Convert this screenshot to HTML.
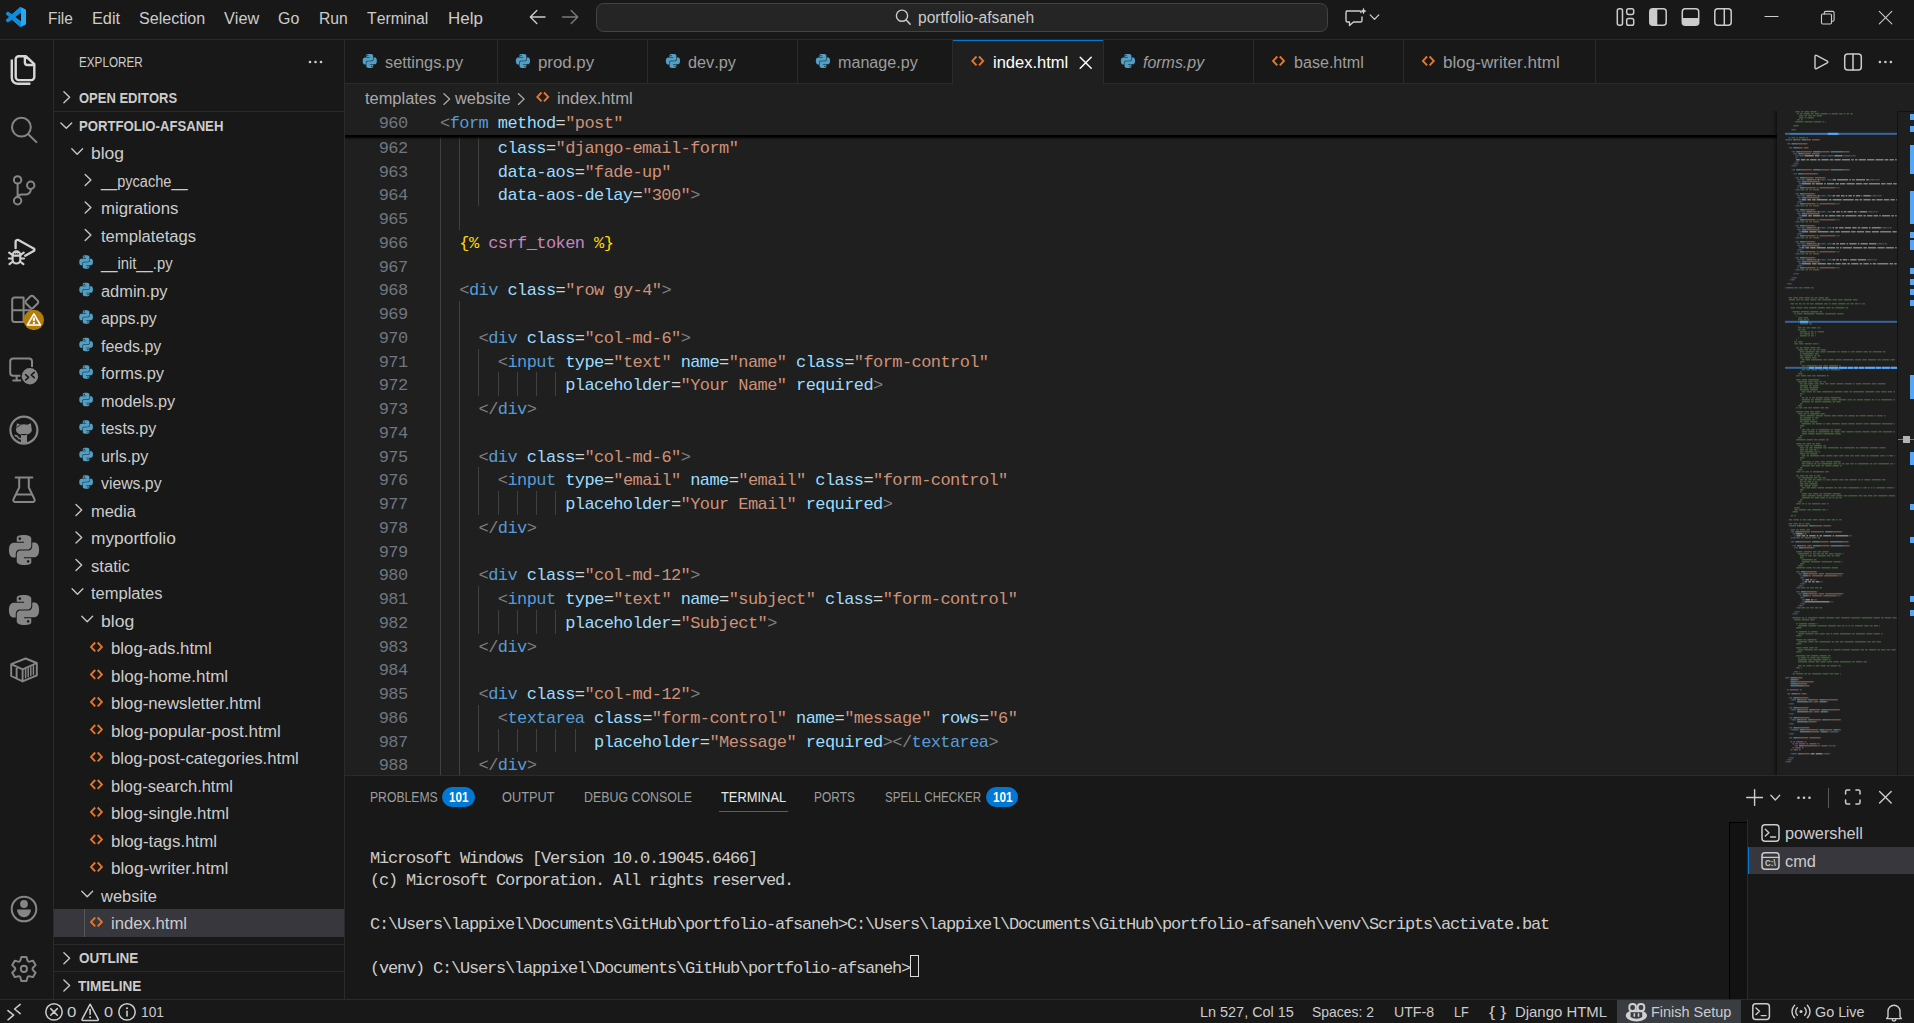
<!DOCTYPE html>
<html lang="en"><head><meta charset="utf-8"><title>index.html - portfolio-afsaneh - Visual Studio Code</title>
<style>
html,body{margin:0;padding:0;background:#181818;}
body{width:1914px;height:1023px;overflow:hidden;position:relative;font-family:"Liberation Sans",sans-serif;font-kerning:none;}
.b{position:absolute;display:block;}
.t{position:absolute;white-space:pre;line-height:20px;transform-origin:0 0;font-family:"Liberation Sans",sans-serif;}
.m{position:absolute;white-space:pre;font-family:"Liberation Mono",monospace;}
.code{font-size:17px;line-height:23.75px;letter-spacing:-0.582px;color:#d4d4d4;}
.term{font-size:17px;line-height:22px;letter-spacing:-1.202px;color:#ccc;}
svg{overflow:visible}
.s{fill:none;stroke:currentColor;stroke-linecap:round;stroke-linejoin:round}
i{font-style:normal}
.g{color:#808080}.n{color:#569cd6}.a{color:#9cdcfe}.v{color:#ce9178}.y{color:#ffd700}.p{color:#c586c0}
</style></head>
<body>
<div class="b" style="left:0px;top:0px;width:1914px;height:1023px;background:#181818;"></div>
<div class="b" style="left:345px;top:84px;width:1569px;height:691px;background:#1f1f1f;"></div>
<div class="b" style="left:0px;top:39px;width:1914px;height:1px;background:#2b2b2b;"></div>
<div class="b" style="left:53px;top:40px;width:1px;height:959px;background:#2b2b2b;"></div>
<div class="b" style="left:344px;top:40px;width:1px;height:959px;background:#2b2b2b;"></div>
<div class="b" style="left:0px;top:999px;width:1914px;height:1px;background:#2b2b2b;"></div>
<div class="b" style="left:345px;top:775px;width:1569px;height:1px;background:#2b2b2b;"></div>
<div class="b" style="left:345px;top:83px;width:1569px;height:1px;background:#2b2b2b;"></div>
<div class="t " style="left:47.80px;top:8.80px;font-size:16px;transform:scaleX(0.9635);color:#cccccc;">File</div>
<div class="t " style="left:91.50px;top:8.80px;font-size:16px;transform:scaleX(1.0170);color:#cccccc;">Edit</div>
<div class="t " style="left:138.60px;top:8.80px;font-size:16px;transform:scaleX(1.0049);color:#cccccc;">Selection</div>
<div class="t " style="left:223.70px;top:8.80px;font-size:16px;transform:scaleX(1.0162);color:#cccccc;">View</div>
<div class="t " style="left:278.30px;top:8.80px;font-size:16px;transform:scaleX(0.9951);color:#cccccc;">Go</div>
<div class="t " style="left:319.20px;top:8.80px;font-size:16px;transform:scaleX(0.9792);color:#cccccc;">Run</div>
<div class="t " style="left:367.10px;top:8.80px;font-size:16px;transform:scaleX(0.9856);color:#cccccc;">Terminal</div>
<div class="t " style="left:447.60px;top:8.80px;font-size:16px;transform:scaleX(1.0588);color:#cccccc;">Help</div>
<div class="b" style="left:596px;top:3px;width:732px;height:29px;box-sizing:border-box;background:#252525;border:1px solid #434343;border-radius:7.5px"></div>
<div class="t " style="left:918.10px;top:7.80px;font-size:16px;transform:scaleX(0.9736);color:#cccccc;">portfolio-afsaneh</div>
<div class="t " style="left:78.70px;top:52.30px;font-size:14px;transform:scaleX(0.8349);color:#cccccc;">EXPLORER</div>
<div class="b" style="left:54px;top:111px;width:290px;height:1px;background:#2b2b2b;"></div>
<div class="t " style="left:78.50px;top:88.30px;font-size:14px;transform:scaleX(0.9269);color:#cccccc;font-weight:700;">OPEN EDITORS</div>
<div class="t " style="left:78.70px;top:116.30px;font-size:14px;transform:scaleX(0.9374);color:#cccccc;font-weight:700;">PORTFOLIO-AFSANEH</div>
<div class="b" style="left:54px;top:909px;width:290px;height:27.5px;background:#37373d;"></div>
<div class="b" style="left:84px;top:909px;width:1px;height:27.5px;background:#585858;"></div>
<div class="t " style="left:91.00px;top:143.80px;font-size:16px;transform:scaleX(1.0922);color:#cccccc;">blog</div>
<div class="t " style="left:101.00px;top:171.80px;font-size:16px;transform:scaleX(0.9102);color:#cccccc;">__pycache__</div>
<div class="t " style="left:101.00px;top:198.80px;font-size:16px;transform:scaleX(1.0493);color:#cccccc;">migrations</div>
<div class="t " style="left:101.00px;top:226.80px;font-size:16px;transform:scaleX(1.0374);color:#cccccc;">templatetags</div>
<div class="t " style="left:101.00px;top:253.80px;font-size:16px;transform:scaleX(0.9244);color:#cccccc;">__init__.py</div>
<div class="t " style="left:101.00px;top:281.80px;font-size:16px;transform:scaleX(1.0249);color:#cccccc;">admin.py</div>
<div class="t " style="left:101.00px;top:308.80px;font-size:16px;transform:scaleX(0.9964);color:#cccccc;">apps.py</div>
<div class="t " style="left:101.00px;top:336.80px;font-size:16px;transform:scaleX(0.9960);color:#cccccc;">feeds.py</div>
<div class="t " style="left:101.00px;top:363.80px;font-size:16px;transform:scaleX(1.0277);color:#cccccc;">forms.py</div>
<div class="t " style="left:101.00px;top:391.80px;font-size:16px;transform:scaleX(1.0153);color:#cccccc;">models.py</div>
<div class="t " style="left:101.00px;top:418.80px;font-size:16px;transform:scaleX(1.0019);color:#cccccc;">tests.py</div>
<div class="t " style="left:101.00px;top:446.80px;font-size:16px;transform:scaleX(1.0046);color:#cccccc;">urls.py</div>
<div class="t " style="left:101.00px;top:473.80px;font-size:16px;transform:scaleX(0.9868);color:#cccccc;">views.py</div>
<div class="t " style="left:91.00px;top:501.80px;font-size:16px;transform:scaleX(1.0290);color:#cccccc;">media</div>
<div class="t " style="left:91.00px;top:528.80px;font-size:16px;transform:scaleX(1.0842);color:#cccccc;">myportfolio</div>
<div class="t " style="left:91.00px;top:556.80px;font-size:16px;transform:scaleX(1.0401);color:#cccccc;">static</div>
<div class="t " style="left:91.30px;top:583.80px;font-size:16px;transform:scaleX(1.0313);color:#cccccc;">templates</div>
<div class="t " style="left:101.00px;top:611.80px;font-size:16px;transform:scaleX(1.0988);color:#cccccc;">blog</div>
<div class="t " style="left:111.00px;top:638.80px;font-size:16px;transform:scaleX(1.0499);color:#cccccc;">blog-ads.html</div>
<div class="t " style="left:111.00px;top:666.80px;font-size:16px;transform:scaleX(1.0623);color:#cccccc;">blog-home.html</div>
<div class="t " style="left:111.00px;top:693.80px;font-size:16px;transform:scaleX(1.0480);color:#cccccc;">blog-newsletter.html</div>
<div class="t " style="left:111.00px;top:721.80px;font-size:16px;transform:scaleX(1.0669);color:#cccccc;">blog-popular-post.html</div>
<div class="t " style="left:111.00px;top:748.80px;font-size:16px;transform:scaleX(1.0456);color:#cccccc;">blog-post-categories.html</div>
<div class="t " style="left:111.00px;top:776.80px;font-size:16px;transform:scaleX(1.0302);color:#cccccc;">blog-search.html</div>
<div class="t " style="left:111.00px;top:803.80px;font-size:16px;transform:scaleX(1.0525);color:#cccccc;">blog-single.html</div>
<div class="t " style="left:111.00px;top:831.80px;font-size:16px;transform:scaleX(1.0552);color:#cccccc;">blog-tags.html</div>
<div class="t " style="left:111.00px;top:858.80px;font-size:16px;transform:scaleX(1.0721);color:#cccccc;">blog-writer.html</div>
<div class="t " style="left:101.00px;top:886.80px;font-size:16px;transform:scaleX(1.0293);color:#cccccc;">website</div>
<div class="t " style="left:111.00px;top:913.80px;font-size:16px;transform:scaleX(1.0428);color:#cccccc;">index.html</div>
<div class="b" style="left:54px;top:944px;width:290px;height:1px;background:#2b2b2b;"></div>
<div class="b" style="left:54px;top:971px;width:290px;height:1px;background:#2b2b2b;"></div>
<div class="t " style="left:78.60px;top:948.30px;font-size:14px;transform:scaleX(0.9629);color:#cccccc;font-weight:700;">OUTLINE</div>
<div class="t " style="left:78.40px;top:976.30px;font-size:14px;transform:scaleX(0.9698);color:#cccccc;font-weight:700;">TIMELINE</div>
<div class="b" style="left:497px;top:40px;width:1px;height:43px;background:#2b2b2b;"></div>
<div class="t " style="left:384.60px;top:52.80px;font-size:16px;transform:scaleX(1.0216);color:#9d9d9d;">settings.py</div>
<div class="b" style="left:647px;top:40px;width:1px;height:43px;background:#2b2b2b;"></div>
<div class="t " style="left:537.80px;top:52.80px;font-size:16px;transform:scaleX(1.0520);color:#9d9d9d;">prod.py</div>
<div class="b" style="left:797px;top:40px;width:1px;height:43px;background:#2b2b2b;"></div>
<div class="t " style="left:687.80px;top:52.80px;font-size:16px;transform:scaleX(1.0148);color:#9d9d9d;">dev.py</div>
<div class="b" style="left:952px;top:40px;width:1px;height:43px;background:#2b2b2b;"></div>
<div class="t " style="left:837.80px;top:52.80px;font-size:16px;transform:scaleX(1.0073);color:#9d9d9d;">manage.py</div>
<div class="b" style="left:1103px;top:40px;width:1px;height:43px;background:#2b2b2b;"></div>
<div class="b" style="left:953px;top:40px;width:150px;height:44px;background:#1f1f1f;"></div>
<div class="b" style="left:953px;top:40px;width:150px;height:1.4px;background:#0078d4;"></div>
<div class="t " style="left:992.80px;top:52.80px;font-size:16px;transform:scaleX(1.0318);color:#ffffff;">index.html</div>
<div class="b" style="left:1253px;top:40px;width:1px;height:43px;background:#2b2b2b;"></div>
<div class="t " style="left:1142.80px;top:52.80px;font-size:16px;transform:scaleX(0.9967);color:#9d9d9d;font-style:italic;">forms.py</div>
<div class="b" style="left:1403px;top:40px;width:1px;height:43px;background:#2b2b2b;"></div>
<div class="t " style="left:1293.60px;top:52.80px;font-size:16px;transform:scaleX(1.0054);color:#9d9d9d;">base.html</div>
<div class="b" style="left:1595px;top:40px;width:1px;height:43px;background:#2b2b2b;"></div>
<div class="t " style="left:1443.40px;top:52.80px;font-size:16px;transform:scaleX(1.0675);color:#9d9d9d;">blog-writer.html</div>
<div class="t " style="left:364.80px;top:88.80px;font-size:16px;transform:scaleX(1.0256);color:#a9a9a9;">templates</div>
<div class="t " style="left:455.10px;top:88.80px;font-size:16px;transform:scaleX(1.0238);color:#a9a9a9;">website</div>
<div class="t " style="left:557.40px;top:88.80px;font-size:16px;transform:scaleX(1.0373);color:#a9a9a9;">index.html</div>
<div class="b" style="left:345px;top:111px;width:1432px;height:664px;overflow:hidden">
<div class="b" style="left:95px;top:23.75px;width:1px;height:641.25px;background:#404040"></div>
<div class="b" style="left:114px;top:23.75px;width:1px;height:95.00px;background:#404040"></div>
<div class="b" style="left:114px;top:190.00px;width:1px;height:475.00px;background:#404040"></div>
<div class="b" style="left:133px;top:23.75px;width:1px;height:71.25px;background:#404040"></div>
<div class="b" style="left:133px;top:237.50px;width:1px;height:47.50px;background:#404040"></div>
<div class="b" style="left:133px;top:356.25px;width:1px;height:47.50px;background:#404040"></div>
<div class="b" style="left:133px;top:475.00px;width:1px;height:47.50px;background:#404040"></div>
<div class="b" style="left:133px;top:593.75px;width:1px;height:47.50px;background:#404040"></div>
<div class="b" style="left:153px;top:261.25px;width:1px;height:23.75px;background:#404040"></div>
<div class="b" style="left:153px;top:380.00px;width:1px;height:23.75px;background:#404040"></div>
<div class="b" style="left:153px;top:498.75px;width:1px;height:23.75px;background:#404040"></div>
<div class="b" style="left:153px;top:617.50px;width:1px;height:23.75px;background:#404040"></div>
<div class="b" style="left:172px;top:261.25px;width:1px;height:23.75px;background:#404040"></div>
<div class="b" style="left:172px;top:380.00px;width:1px;height:23.75px;background:#404040"></div>
<div class="b" style="left:172px;top:498.75px;width:1px;height:23.75px;background:#404040"></div>
<div class="b" style="left:172px;top:617.50px;width:1px;height:23.75px;background:#404040"></div>
<div class="b" style="left:191px;top:261.25px;width:1px;height:23.75px;background:#404040"></div>
<div class="b" style="left:191px;top:380.00px;width:1px;height:23.75px;background:#404040"></div>
<div class="b" style="left:191px;top:498.75px;width:1px;height:23.75px;background:#404040"></div>
<div class="b" style="left:191px;top:617.50px;width:1px;height:23.75px;background:#404040"></div>
<div class="b" style="left:210px;top:261.25px;width:1px;height:23.75px;background:#404040"></div>
<div class="b" style="left:210px;top:380.00px;width:1px;height:23.75px;background:#404040"></div>
<div class="b" style="left:210px;top:498.75px;width:1px;height:23.75px;background:#404040"></div>
<div class="b" style="left:210px;top:617.50px;width:1px;height:23.75px;background:#404040"></div>
<div class="b" style="left:230px;top:617.50px;width:1px;height:23.75px;background:#404040"></div>
<div class="m code" style="left:0;top:25.75px;width:62.5px;text-align:right;color:#6e7681">962</div>
<div class="m code" style="left:152.82px;top:25.75px"><i class="a">class</i>=<i class="v">"django-email-form"</i></div>
<div class="m code" style="left:0;top:49.50px;width:62.5px;text-align:right;color:#6e7681">963</div>
<div class="m code" style="left:152.82px;top:49.50px"><i class="a">data-aos</i>=<i class="v">"fade-up"</i></div>
<div class="m code" style="left:0;top:73.25px;width:62.5px;text-align:right;color:#6e7681">964</div>
<div class="m code" style="left:152.82px;top:73.25px"><i class="a">data-aos-delay</i>=<i class="v">"300"</i><i class="g">&gt;</i></div>
<div class="m code" style="left:0;top:97.00px;width:62.5px;text-align:right;color:#6e7681">965</div>
<div class="m code" style="left:0;top:120.75px;width:62.5px;text-align:right;color:#6e7681">966</div>
<div class="m code" style="left:114.34px;top:120.75px"><i class="y">{%</i> <i class="p">csrf_token</i> <i class="y">%}</i></div>
<div class="m code" style="left:0;top:144.50px;width:62.5px;text-align:right;color:#6e7681">967</div>
<div class="m code" style="left:0;top:168.25px;width:62.5px;text-align:right;color:#6e7681">968</div>
<div class="m code" style="left:114.34px;top:168.25px"><i class="g">&lt;</i><i class="n">div</i> <i class="a">class</i>=<i class="v">"row gy-4"</i><i class="g">&gt;</i></div>
<div class="m code" style="left:0;top:192.00px;width:62.5px;text-align:right;color:#6e7681">969</div>
<div class="m code" style="left:0;top:215.75px;width:62.5px;text-align:right;color:#6e7681">970</div>
<div class="m code" style="left:133.58px;top:215.75px"><i class="g">&lt;</i><i class="n">div</i> <i class="a">class</i>=<i class="v">"col-md-6"</i><i class="g">&gt;</i></div>
<div class="m code" style="left:0;top:239.50px;width:62.5px;text-align:right;color:#6e7681">971</div>
<div class="m code" style="left:152.82px;top:239.50px"><i class="g">&lt;</i><i class="n">input</i> <i class="a">type</i>=<i class="v">"text"</i> <i class="a">name</i>=<i class="v">"name"</i> <i class="a">class</i>=<i class="v">"form-control"</i></div>
<div class="m code" style="left:0;top:263.25px;width:62.5px;text-align:right;color:#6e7681">972</div>
<div class="m code" style="left:220.16px;top:263.25px"><i class="a">placeholder</i>=<i class="v">"Your Name"</i> <i class="a">required</i><i class="g">&gt;</i></div>
<div class="m code" style="left:0;top:287.00px;width:62.5px;text-align:right;color:#6e7681">973</div>
<div class="m code" style="left:133.58px;top:287.00px"><i class="g">&lt;/</i><i class="n">div</i><i class="g">&gt;</i></div>
<div class="m code" style="left:0;top:310.75px;width:62.5px;text-align:right;color:#6e7681">974</div>
<div class="m code" style="left:0;top:334.50px;width:62.5px;text-align:right;color:#6e7681">975</div>
<div class="m code" style="left:133.58px;top:334.50px"><i class="g">&lt;</i><i class="n">div</i> <i class="a">class</i>=<i class="v">"col-md-6"</i><i class="g">&gt;</i></div>
<div class="m code" style="left:0;top:358.25px;width:62.5px;text-align:right;color:#6e7681">976</div>
<div class="m code" style="left:152.82px;top:358.25px"><i class="g">&lt;</i><i class="n">input</i> <i class="a">type</i>=<i class="v">"email"</i> <i class="a">name</i>=<i class="v">"email"</i> <i class="a">class</i>=<i class="v">"form-control"</i></div>
<div class="m code" style="left:0;top:382.00px;width:62.5px;text-align:right;color:#6e7681">977</div>
<div class="m code" style="left:220.16px;top:382.00px"><i class="a">placeholder</i>=<i class="v">"Your Email"</i> <i class="a">required</i><i class="g">&gt;</i></div>
<div class="m code" style="left:0;top:405.75px;width:62.5px;text-align:right;color:#6e7681">978</div>
<div class="m code" style="left:133.58px;top:405.75px"><i class="g">&lt;/</i><i class="n">div</i><i class="g">&gt;</i></div>
<div class="m code" style="left:0;top:429.50px;width:62.5px;text-align:right;color:#6e7681">979</div>
<div class="m code" style="left:0;top:453.25px;width:62.5px;text-align:right;color:#6e7681">980</div>
<div class="m code" style="left:133.58px;top:453.25px"><i class="g">&lt;</i><i class="n">div</i> <i class="a">class</i>=<i class="v">"col-md-12"</i><i class="g">&gt;</i></div>
<div class="m code" style="left:0;top:477.00px;width:62.5px;text-align:right;color:#6e7681">981</div>
<div class="m code" style="left:152.82px;top:477.00px"><i class="g">&lt;</i><i class="n">input</i> <i class="a">type</i>=<i class="v">"text"</i> <i class="a">name</i>=<i class="v">"subject"</i> <i class="a">class</i>=<i class="v">"form-control"</i></div>
<div class="m code" style="left:0;top:500.75px;width:62.5px;text-align:right;color:#6e7681">982</div>
<div class="m code" style="left:220.16px;top:500.75px"><i class="a">placeholder</i>=<i class="v">"Subject"</i><i class="g">&gt;</i></div>
<div class="m code" style="left:0;top:524.50px;width:62.5px;text-align:right;color:#6e7681">983</div>
<div class="m code" style="left:133.58px;top:524.50px"><i class="g">&lt;/</i><i class="n">div</i><i class="g">&gt;</i></div>
<div class="m code" style="left:0;top:548.25px;width:62.5px;text-align:right;color:#6e7681">984</div>
<div class="m code" style="left:0;top:572.00px;width:62.5px;text-align:right;color:#6e7681">985</div>
<div class="m code" style="left:133.58px;top:572.00px"><i class="g">&lt;</i><i class="n">div</i> <i class="a">class</i>=<i class="v">"col-md-12"</i><i class="g">&gt;</i></div>
<div class="m code" style="left:0;top:595.75px;width:62.5px;text-align:right;color:#6e7681">986</div>
<div class="m code" style="left:152.82px;top:595.75px"><i class="g">&lt;</i><i class="n">textarea</i> <i class="a">class</i>=<i class="v">"form-control"</i> <i class="a">name</i>=<i class="v">"message"</i> <i class="a">rows</i>=<i class="v">"6"</i></div>
<div class="m code" style="left:0;top:619.50px;width:62.5px;text-align:right;color:#6e7681">987</div>
<div class="m code" style="left:249.02px;top:619.50px"><i class="a">placeholder</i>=<i class="v">"Message"</i> <i class="a">required</i><i class="g">&gt;</i><i class="g">&lt;/</i><i class="n">textarea</i><i class="g">&gt;</i></div>
<div class="m code" style="left:0;top:643.25px;width:62.5px;text-align:right;color:#6e7681">988</div>
<div class="m code" style="left:133.58px;top:643.25px"><i class="g">&lt;/</i><i class="n">div</i><i class="g">&gt;</i></div>
<div class="b" style="left:0;top:23.75px;width:1432px;height:5.2px;background:linear-gradient(#000 0,#000 30%,rgba(0,0,0,.55) 58%,rgba(0,0,0,.12) 82%,rgba(0,0,0,0) 100%)"></div>
<div class="b" style="left:1426px;top:0;width:6px;height:664px;background:linear-gradient(to right,rgba(0,0,0,0),rgba(0,0,0,.12) 50%,rgba(0,0,0,.5))"></div>
<div class="b" style="left:0;top:0;width:1426px;height:23.75px;background:#1f1f1f"></div>
<div class="m code" style="left:0;top:1.00px;width:62.5px;text-align:right;color:#6e7681">960</div>
<div class="m code" style="left:95.10px;top:1.00px"><i class="g">&lt;</i><i class="n">form</i> <i class="a">method</i>=<i class="v">"post"</i></div>
</div>
<div class="t " style="left:369.90px;top:787.30px;font-size:14px;transform:scaleX(0.8697);color:#9d9d9d;">PROBLEMS</div>
<div class="b" style="left:442.3px;top:787px;width:32.6px;height:20px;border-radius:10px;background:#0078d4"></div>
<div class="t " style="left:449.10px;top:787.30px;font-size:14px;transform:scaleX(0.8288);color:#fff;font-weight:700;">101</div>
<div class="t " style="left:501.80px;top:787.30px;font-size:14px;transform:scaleX(0.9115);color:#9d9d9d;">OUTPUT</div>
<div class="t " style="left:583.60px;top:787.30px;font-size:14px;transform:scaleX(0.8847);color:#9d9d9d;">DEBUG CONSOLE</div>
<div class="t " style="left:720.50px;top:787.30px;font-size:14px;transform:scaleX(0.9205);color:#e7e7e7;">TERMINAL</div>
<div class="b" style="left:719.2px;top:810.8px;width:68.7px;height:1.3px;background:#0078d4;"></div>
<div class="t " style="left:814.40px;top:787.30px;font-size:14px;transform:scaleX(0.8472);color:#9d9d9d;">PORTS</div>
<div class="t " style="left:884.60px;top:787.30px;font-size:14px;transform:scaleX(0.8286);color:#9d9d9d;">SPELL CHECKER</div>
<div class="b" style="left:985.6px;top:787px;width:32.6px;height:20px;border-radius:10px;background:#0078d4"></div>
<div class="t " style="left:992.50px;top:787.30px;font-size:14px;transform:scaleX(0.8374);color:#fff;font-weight:700;">101</div>
<div class="m term" style="left:370px;top:848px">Microsoft Windows [Version 10.0.19045.6466]</div>
<div class="m term" style="left:370px;top:870px">(c) Microsoft Corporation. All rights reserved.</div>
<div class="m term" style="left:370px;top:914px">C:\Users\lappixel\Documents\GitHub\portfolio-afsaneh&gt;C:\Users\lappixel\Documents\GitHub\portfolio-afsaneh\venv\Scripts\activate.bat</div>
<div class="m term" style="left:370px;top:958px">(venv) C:\Users\lappixel\Documents\GitHub\portfolio-afsaneh&gt;</div>
<div class="b" style="left:910px;top:955px;width:9px;height:22px;box-sizing:border-box;border:1px solid #dcdcdc"></div>
<div class="b" style="left:1828px;top:788px;width:1px;height:20px;background:#5a5a5a;"></div>
<div class="b" style="left:1729px;top:822px;width:18px;height:177px;background:#121212;"></div>
<div class="b" style="left:1729px;top:822px;width:18px;height:1px;background:#000;"></div>
<div class="b" style="left:1729px;top:822px;width:1px;height:177px;background:#000;"></div>
<div class="b" style="left:1747px;top:819px;width:1px;height:180px;background:#2b2b2b;"></div>
<div class="b" style="left:1748px;top:847px;width:166px;height:27px;background:#37373d;"></div>
<div class="b" style="left:1748px;top:847px;width:1.2px;height:27px;background:#0078d4;"></div>
<div class="t " style="left:1784.80px;top:823.80px;font-size:16px;transform:scaleX(1.0177);color:#cccccc;">powershell</div>
<div class="t " style="left:1764.95px;top:853.30px;font-size:9px;transform:scaleX(0.8844);color:#ccc;font-weight:700;">C:\</div>
<div class="t " style="left:1784.80px;top:851.80px;font-size:16px;transform:scaleX(1.0236);color:#cccccc;">cmd</div>
<div class="t " style="left:67.25px;top:1001.80px;font-size:15px;transform:scaleX(1.1208);color:#cccccc;">0</div>
<div class="t " style="left:104.05px;top:1001.80px;font-size:15px;transform:scaleX(1.0848);color:#cccccc;">0</div>
<div class="t " style="left:141.05px;top:1001.80px;font-size:15px;transform:scaleX(0.9170);color:#cccccc;">101</div>
<div class="t " style="left:1199.55px;top:1001.80px;font-size:15px;transform:scaleX(0.9618);color:#cccccc;">Ln 527, Col 15</div>
<div class="t " style="left:1312.25px;top:1001.80px;font-size:15px;transform:scaleX(0.9287);color:#cccccc;">Spaces: 2</div>
<div class="t " style="left:1393.65px;top:1001.80px;font-size:15px;transform:scaleX(0.9425);color:#cccccc;">UTF-8</div>
<div class="t " style="left:1453.65px;top:1001.80px;font-size:15px;transform:scaleX(0.8483);color:#cccccc;">LF</div>
<div class="t " style="left:1489.35px;top:1001.80px;font-size:15px;transform:scaleX(1.2159);color:#cccccc;">{ }</div>
<div class="t " style="left:1514.75px;top:1001.80px;font-size:15px;transform:scaleX(0.9937);color:#cccccc;">Django HTML</div>
<div class="b" style="left:1617px;top:1000px;width:124px;height:23px;background:#393c41;"></div>
<div class="t " style="left:1650.75px;top:1001.80px;font-size:15px;transform:scaleX(0.9637);color:#cccccc;">Finish Setup</div>
<div class="t " style="left:1814.75px;top:1001.80px;font-size:15px;transform:scaleX(0.9566);color:#cccccc;">Go Live</div>
<div class="b" style="left:1897px;top:111px;width:1px;height:664px;background:#121212;"></div>
<div class="b" style="left:1897px;top:111px;width:17px;height:1px;background:#121212;"></div>
<div class="b" style="left:1909.5px;top:113.6px;width:4.5px;height:6.4px;background:#56a6f8;"></div>
<div class="b" style="left:1909.5px;top:126px;width:4.5px;height:5.9px;background:#56a6f8;"></div>
<div class="b" style="left:1909.5px;top:145px;width:4.5px;height:29.3px;background:#56a6f8;"></div>
<div class="b" style="left:1909.5px;top:191px;width:4.5px;height:32.7px;background:#56a6f8;"></div>
<div class="b" style="left:1909.5px;top:232.1px;width:4.5px;height:5.9px;background:#56a6f8;"></div>
<div class="b" style="left:1909.5px;top:240.4px;width:4.5px;height:9.2px;background:#56a6f8;"></div>
<div class="b" style="left:1909.5px;top:268.1px;width:4.5px;height:5.9px;background:#56a6f8;"></div>
<div class="b" style="left:1909.5px;top:279.3px;width:4.5px;height:5.7px;background:#56a6f8;"></div>
<div class="b" style="left:1909.5px;top:289.4px;width:4.5px;height:5.8px;background:#56a6f8;"></div>
<div class="b" style="left:1909.5px;top:300.3px;width:4.5px;height:5.9px;background:#56a6f8;"></div>
<div class="b" style="left:1909.5px;top:375.4px;width:4.5px;height:23.9px;background:#56a6f8;"></div>
<div class="b" style="left:1909.5px;top:452.4px;width:4.5px;height:13.1px;background:#56a6f8;"></div>
<div class="b" style="left:1909.5px;top:503.8px;width:4.5px;height:5.8px;background:#56a6f8;"></div>
<div class="b" style="left:1909.5px;top:536.8px;width:4.5px;height:5.9px;background:#56a6f8;"></div>
<div class="b" style="left:1909.5px;top:595.9px;width:4.5px;height:5.9px;background:#56a6f8;"></div>
<div class="b" style="left:1909.5px;top:609.9px;width:4.5px;height:5.9px;background:#56a6f8;"></div>
<div class="b" style="left:1898px;top:438.6px;width:16px;height:1.8px;background:#7d7d7d;"></div>
<div class="b" style="left:1902.8px;top:436px;width:7.2px;height:6.6px;background:#b4b4b4;"></div>
<svg class="b" style="left:0;top:0" width="1914" height="1023" viewBox="0 0 1914 1023"><g transform="translate(6 7) scale(0.833333)" ><clipPath id="vl"><rect x="0" y="0" width="17.9" height="24"/></clipPath><path d="M23.15 2.587L18.21.21a1.494 1.494 0 0 0-1.705.29l-9.46 8.63-4.12-3.128a.999.999 0 0 0-1.276.057L.327 7.261A1 1 0 0 0 .326 8.74L3.899 12 .326 15.26a1 1 0 0 0 .001 1.479L1.65 17.94a.999.999 0 0 0 1.276.057l4.12-3.128 9.46 8.63a1.492 1.492 0 0 0 1.704.29l4.942-2.377A1.5 1.5 0 0 0 24 20.06V3.939a1.5 1.5 0 0 0-.85-1.352zm-5.146 14.861L10.826 12l7.178-5.448v10.896z" fill="#27a9f4"/><path d="M23.15 2.587L18.21.21a1.494 1.494 0 0 0-1.705.29l-9.46 8.63-4.12-3.128a.999.999 0 0 0-1.276.057L.327 7.261A1 1 0 0 0 .326 8.74L3.899 12 .326 15.26a1 1 0 0 0 .001 1.479L1.65 17.94a.999.999 0 0 0 1.276.057l4.12-3.128 9.46 8.63a1.492 1.492 0 0 0 1.704.29l4.942-2.377A1.5 1.5 0 0 0 24 20.06V3.939a1.5 1.5 0 0 0-.85-1.352zm-5.146 14.861L10.826 12l7.178-5.448v10.896z" fill="#0e8bdc" clip-path="url(#vl)"/></g>
<path d="M545,17 H530.5 M536.8,10.5 L530.3,17 L536.8,23.5" fill="none" stroke="#ccc" stroke-width="1.4" stroke-linecap="round" stroke-linejoin="round" />
<path d="M562.5,17 H577.5 M571.2,10.5 L577.7,17 L571.2,23.5" fill="none" stroke="#7a7a7a" stroke-width="1.4" stroke-linecap="round" stroke-linejoin="round" />
<circle cx="902" cy="15.7" r="5.6" fill="none" stroke="#ccc" stroke-width="1.4" />
<path d="M906.2,20 L910.2,24.3" fill="none" stroke="#ccc" stroke-width="1.5" stroke-linecap="round" stroke-linejoin="round" />
<path d="M1346.5,11 h13 a1.5,1.5 0 0 1 1.5,1.5 M1362,17 v3.5 a1.5,1.5 0 0 1 -1.5,1.5 h-7 l-4,3.6 v-3.6 h-2 a1.5,1.5 0 0 1 -1.5,-1.5 v-8 a1.5,1.5 0 0 1 1.5,-1.5" fill="none" stroke="#ccc" stroke-width="1.4" stroke-linecap="round" stroke-linejoin="round" />
<path d="M1363.5,7.5 q0.3,3 3,3.5 q-2.7,0.5 -3,3.5 q-0.3,-3 -3,-3.5 q2.7,-0.5 3,-3.5z" fill="#ccc" />
<path d="M1370.2,14.9 l4.3,4.5 l4.3,-4.5" fill="none" stroke="#ccc" stroke-width="1.3" stroke-linecap="round" stroke-linejoin="round" />
<rect x="1617.3" y="8.8" width="5.2" height="16.4" rx="2" fill="none" stroke="#ccc" stroke-width="1.5" />
<rect x="1626.7" y="8.8" width="7" height="5.6" rx="1.8" fill="none" stroke="#ccc" stroke-width="1.5" />
<rect x="1626.7" y="18.6" width="7" height="6.6" rx="1.8" fill="none" stroke="#ccc" stroke-width="1.5" />
<rect x="1649.8" y="8.8" width="16.4" height="16.4" rx="3" fill="none" stroke="#ccc" stroke-width="1.5" />
<path d="M1652.8,9 h4.5 v16 h-4.5 a3,3 0 0 1 -3,-3 v-10 a3,3 0 0 1 3,-3z" fill="#ccc" />
<rect x="1682.3" y="8.8" width="16.4" height="16.4" rx="3" fill="none" stroke="#ccc" stroke-width="1.5" />
<path d="M1682.3,18 h16.4 v4 a3,3 0 0 1 -3,3 h-10.4 a3,3 0 0 1 -3,-3z" fill="#ccc" />
<rect x="1714.8" y="8.8" width="16.4" height="16.4" rx="3" fill="none" stroke="#ccc" stroke-width="1.5" />
<path d="M1724.3,9 v16" fill="none" stroke="#ccc" stroke-width="1.5" stroke-linecap="round" stroke-linejoin="round" />
<path d="M1765,16.5 H1778" fill="none" stroke="#ccc" stroke-width="1.1" stroke-linecap="round" stroke-linejoin="round" />
<rect x="1821.5" y="14" width="10" height="10" rx="1.2" fill="none" stroke="#ccc" stroke-width="1.1" />
<path d="M1824.3,14 v-1.2 a1.4,1.4 0 0 1 1.4,-1.4 h7 a1.4,1.4 0 0 1 1.4,1.4 v7 a1.4,1.4 0 0 1 -1.4,1.4 h-1.2" fill="none" stroke="#ccc" stroke-width="1.1" stroke-linecap="round" stroke-linejoin="round" />
<path d="M1879.3,11.3 L1891.8,23.8 M1891.8,11.3 L1879.3,23.8" fill="none" stroke="#ccc" stroke-width="1.1" stroke-linecap="round" stroke-linejoin="round" />
<path d="M18.7,56.25 H25.8 L34.3,64.2 V77.1 a3,3 0 0 1 -3,3 H18.7 a3,3 0 0 1 -3,-3 V59.25 a3,3 0 0 1 3,-3z M24.9,56.6 V62.5 a2.5,2.5 0 0 0 2.5,2.5 H34" fill="none" stroke="#d7d7d7" stroke-width="2.4" stroke-linecap="round" stroke-linejoin="round" />
<path d="M11.8,59.6 V77.8 a6,6 0 0 0 6,6 H30.4" fill="none" stroke="#d7d7d7" stroke-width="2.4" stroke-linecap="butt" stroke-linejoin="round" />
<circle cx="21.4" cy="127.2" r="9.4" fill="none" stroke="#868686" stroke-width="2" />
<path d="M28.3,134.3 L36.4,142.1" fill="none" stroke="#868686" stroke-width="2" stroke-linecap="round" stroke-linejoin="round" />
<circle cx="17.6" cy="179.9" r="3.7" fill="none" stroke="#868686" stroke-width="2" />
<circle cx="17.6" cy="200.8" r="3.7" fill="none" stroke="#868686" stroke-width="2" />
<circle cx="30.7" cy="185.2" r="3.7" fill="none" stroke="#868686" stroke-width="2" />
<path d="M17.6,183.6 V197.1 M30.7,188.9 v1 a4.5,4.5 0 0 1 -4.5,4.5 h-4.1 a4.5,4.5 0 0 0 -4.5,2.7" fill="none" stroke="#868686" stroke-width="2" stroke-linecap="round" stroke-linejoin="round" />
<path d="M15.6,248.2 V241.8 a1.9,1.9 0 0 1 2.8,-1.7 L33.6,248.4 a1.5,1.5 0 0 1 0,2.7 L25.2,255.8" fill="none" stroke="#d0d0d0" stroke-width="2.3" stroke-linecap="round" stroke-linejoin="round" />
<path d="M12.6,256.5 V255.2 a3.85,3.85 0 0 1 7.7,0 V259.7 a3.85,3.85 0 0 1 -7.7,0 Z M12.6,255.6 H20.3" fill="none" stroke="#d0d0d0" stroke-width="2.1" stroke-linecap="round" stroke-linejoin="round" />
<path d="M15.3,253.2 l1.15,-1.1 l1.15,1.1" fill="none" stroke="#d0d0d0" stroke-width="1.2" stroke-linecap="round" stroke-linejoin="round" />
<path d="M9.2,252.6 L11.9,254.6 M8.9,258.5 H11.8 M9.5,264.1 L12.2,262 M23.7,252.6 L21,254.6 M24,258.5 H21.1 M23.4,264.1 L20.7,262" fill="none" stroke="#d0d0d0" stroke-width="2.2" stroke-linecap="round" stroke-linejoin="round" />
<path d="M23.6,297.6 V322 M12.2,310.2 H31 M26,322 H14.7 a2.5,2.5 0 0 1 -2.5,-2.5 V300.1 a2.5,2.5 0 0 1 2.5,-2.5 H23.6" fill="none" stroke="#868686" stroke-width="2" stroke-linecap="round" stroke-linejoin="round" />
<path d="M30.4,296.3 a2,2 0 0 1 2.9,0 l4.3,4.3 a2,2 0 0 1 0,2.9 l-4.3,4.3 a2,2 0 0 1 -2.9,0 l-4.3,-4.3 a2,2 0 0 1 0,-2.9z" fill="none" stroke="#868686" stroke-width="2" stroke-linecap="round" stroke-linejoin="round" />
<circle cx="33.8" cy="320" r="10.2" fill="#b47d07"  />
<path d="M33.9,313.9 L40.4,325 H27.4Z" fill="none" stroke="#fff" stroke-width="1.6" stroke-linecap="round" stroke-linejoin="round" />
<path d="M33.9,317.6 v3.3" fill="none" stroke="#fff" stroke-width="2.1" stroke-linecap="butt" stroke-linejoin="round" />
<circle cx="33.9" cy="323" r="1.15" fill="#fff"  />
<path d="M27,375.8 H13.2 a3,3 0 0 1 -3,-3 V361.6 a3,3 0 0 1 3,-3 H29 a3,3 0 0 1 3,3 V366.5" fill="none" stroke="#868686" stroke-width="2" stroke-linecap="round" stroke-linejoin="round" />
<path d="M16.6,376 v4.4 M13.2,380.6 h7.2" fill="none" stroke="#868686" stroke-width="2" stroke-linecap="round" stroke-linejoin="round" />
<circle cx="29.9" cy="376.3" r="9.6" fill="#181818"  />
<circle cx="29.9" cy="376.3" r="8.2" fill="#868686"  />
<path d="M25.6,374.6 l3,2.7 l-3,2.7 M34.2,372.3 l-3,2.7 l3,2.7" fill="none" stroke="#181818" stroke-width="1.6" stroke-linecap="round" stroke-linejoin="round" />
<circle cx="23.9" cy="430.1" r="13.5" fill="none" stroke="#868686" stroke-width="2.2" />
<path d="M15.9,429.7 a8,5.5 0 1 0 16,0 a8,5.5 0 1 0 -16,0z M16.3,428 L16.9,423.2 L21,425z M31.5,428 L30.9,423.2 L26.8,425z M20.9,434 H27 V443 Q23.9,443.9 20.9,443Z" fill="#868686" />
<path d="M15.2,435.6 q2,0.1 2.8,1.7 q0.9,1.7 3.2,1.4" fill="none" stroke="#868686" stroke-width="1.6" stroke-linecap="round" stroke-linejoin="round" />
<path d="M15.6,477.6 H32.4 M19.2,477.6 V487.5 L13.5,499.3 a1.7,1.7 0 0 0 1.5,2.6 H33 a1.7,1.7 0 0 0 1.5,-2.6 L28.8,487.5 V477.6 M16.2,494.5 H31.8" fill="none" stroke="#868686" stroke-width="2" stroke-linecap="round" stroke-linejoin="round" />
<g transform="translate(9 535) scale(1.25)" ><path d="M14.25.18l.9.2.73.26.59.3.45.32.34.34.25.34.16.33.1.3.04.26.02.2-.01.13V8.5l-.05.63-.13.55-.21.46-.26.38-.3.31-.33.25-.35.19-.35.14-.33.1-.3.07-.26.04-.21.02H8.77l-.69.05-.59.14-.5.22-.41.27-.33.32-.27.35-.2.36-.15.37-.1.35-.07.32-.04.27-.02.21v3.06H3.17l-.21-.03-.28-.07-.32-.12-.35-.18-.36-.26-.36-.36-.35-.46-.32-.59-.28-.73-.21-.88-.14-1.05-.05-1.23.06-1.22.16-1.04.24-.87.32-.71.36-.57.4-.44.42-.33.42-.24.4-.16.36-.1.32-.05.24-.01h.16l.06.01h8.16v-.83H6.18l-.01-2.75-.02-.37.05-.34.11-.31.17-.28.25-.26.31-.23.38-.2.44-.18.51-.15.58-.12.64-.1.71-.06.77-.04.84-.02 1.27.05zm-6.3 1.98l-.23.33-.08.41.08.41.23.34.33.22.41.09.41-.09.33-.22.23-.34.08-.41-.08-.41-.23-.33-.33-.22-.41-.09-.41.09zm13.09 3.95l.28.06.32.12.35.18.36.27.36.35.35.47.32.59.28.73.21.88.14 1.04.05 1.23-.06 1.23-.16 1.04-.24.86-.32.71-.36.57-.4.45-.42.33-.42.24-.4.16-.36.09-.32.05-.24.02-.16-.01h-8.22v.82h5.84l.01 2.76.02.36-.05.34-.11.31-.17.29-.25.25-.31.24-.38.2-.44.17-.51.15-.58.13-.64.09-.71.07-.77.04-.84.01-1.27-.04-1.07-.14-.9-.2-.73-.25-.59-.3-.45-.33-.34-.34-.25-.34-.16-.33-.1-.3-.04-.25-.02-.2.01-.13v-5.34l.05-.64.13-.54.21-.46.26-.38.3-.32.33-.24.35-.2.35-.14.33-.1.3-.06.26-.04.21-.02.13-.01h5.84l.69-.05.59-.14.5-.21.41-.28.33-.32.27-.35.2-.36.15-.36.1-.35.07-.32.04-.28.02-.21V6.07h2.09l.14.01zm-6.47 14.25l-.23.33-.08.41.08.41.23.33.33.23.41.08.41-.08.33-.23.23-.33.08-.41-.08-.41-.23-.33-.33-.23-.41-.08-.41.08z" fill="#868686"/></g>
<g transform="translate(9 595) scale(1.25)" ><path d="M14.25.18l.9.2.73.26.59.3.45.32.34.34.25.34.16.33.1.3.04.26.02.2-.01.13V8.5l-.05.63-.13.55-.21.46-.26.38-.3.31-.33.25-.35.19-.35.14-.33.1-.3.07-.26.04-.21.02H8.77l-.69.05-.59.14-.5.22-.41.27-.33.32-.27.35-.2.36-.15.37-.1.35-.07.32-.04.27-.02.21v3.06H3.17l-.21-.03-.28-.07-.32-.12-.35-.18-.36-.26-.36-.36-.35-.46-.32-.59-.28-.73-.21-.88-.14-1.05-.05-1.23.06-1.22.16-1.04.24-.87.32-.71.36-.57.4-.44.42-.33.42-.24.4-.16.36-.1.32-.05.24-.01h.16l.06.01h8.16v-.83H6.18l-.01-2.75-.02-.37.05-.34.11-.31.17-.28.25-.26.31-.23.38-.2.44-.18.51-.15.58-.12.64-.1.71-.06.77-.04.84-.02 1.27.05zm-6.3 1.98l-.23.33-.08.41.08.41.23.34.33.22.41.09.41-.09.33-.22.23-.34.08-.41-.08-.41-.23-.33-.33-.22-.41-.09-.41.09zm13.09 3.95l.28.06.32.12.35.18.36.27.36.35.35.47.32.59.28.73.21.88.14 1.04.05 1.23-.06 1.23-.16 1.04-.24.86-.32.71-.36.57-.4.45-.42.33-.42.24-.4.16-.36.09-.32.05-.24.02-.16-.01h-8.22v.82h5.84l.01 2.76.02.36-.05.34-.11.31-.17.29-.25.25-.31.24-.38.2-.44.17-.51.15-.58.13-.64.09-.71.07-.77.04-.84.01-1.27-.04-1.07-.14-.9-.2-.73-.25-.59-.3-.45-.33-.34-.34-.25-.34-.16-.33-.1-.3-.04-.25-.02-.2.01-.13v-5.34l.05-.64.13-.54.21-.46.26-.38.3-.32.33-.24.35-.2.35-.14.33-.1.3-.06.26-.04.21-.02.13-.01h5.84l.69-.05.59-.14.5-.21.41-.28.33-.32.27-.35.2-.36.15-.36.1-.35.07-.32.04-.28.02-.21V6.07h2.09l.14.01zm-6.47 14.25l-.23.33-.08.41.08.41.23.33.33.23.41.08.41-.08.33-.23.23-.33.08-.41-.08-.41-.23-.33-.33-.23-.41-.08-.41.08z" fill="#868686"/></g>
<path d="M11.2,664.2 L25.6,658.5 L36.8,663 L22.6,669.4Z M11.2,664.2 V676 L22.6,681.4 V669.4 M36.8,663 V675.4 L22.6,681.4 M16.6,666.8 V678.3" fill="none" stroke="#868686" stroke-width="1.9" stroke-linecap="round" stroke-linejoin="round" />
<path d="M25.6,669.3 V677.8 M28.2,668.1 V676.7 M30.8,666.9 V675.6 M33.4,665.8 V674.5" fill="none" stroke="#868686" stroke-width="1.5" stroke-linecap="round" stroke-linejoin="round" />
<circle cx="24" cy="909" r="12.3" fill="none" stroke="#868686" stroke-width="2" />
<circle cx="24" cy="904" r="3.9" fill="#868686"  />
<path d="M17,909.6 H31 a7,7.6 0 0 1 -14,0z" fill="#868686" />
<path d="M20.60,959.60 L21.35,956.90 L26.45,956.90 L27.20,959.60 Q27.65,962.40 30.30,961.39 L33.02,960.69 L35.57,965.11 L33.60,967.11 Q31.40,968.90 33.60,970.69 L35.57,972.69 L33.02,977.11 L30.30,976.41 Q27.65,975.40 27.20,978.20 L26.45,980.90 L21.35,980.90 L20.60,978.20 Q20.15,975.40 17.50,976.41 L14.78,977.11 L12.23,972.69 L14.20,970.69 Q16.40,968.90 14.20,967.11 L12.23,965.11 L14.78,960.69 L17.50,961.39 Q20.15,962.40 20.60,959.60 Z" fill="none" stroke="#868686" stroke-width="2" stroke-linecap="round" stroke-linejoin="round" />
<circle cx="23.9" cy="968.9" r="3.1" fill="none" stroke="#868686" stroke-width="1.9" />
<circle cx="310" cy="62" r="1.3" fill="#ccc"  />
<circle cx="315.5" cy="62" r="1.3" fill="#ccc"  />
<circle cx="321" cy="62" r="1.3" fill="#ccc"  />
<path d="M63.9,91.8 l5.7,5.5 l-5.7,5.5" fill="none" stroke="#c5c5c5" stroke-width="1.4" stroke-linecap="round" stroke-linejoin="round" />
<path d="M60.9,122.9 l5.4,5.4 l5.4,-5.4" fill="none" stroke="#c5c5c5" stroke-width="1.4" stroke-linecap="round" stroke-linejoin="round" />
<path d="M71.8,148.8 l5.4,5.4 l5.4,-5.4" fill="none" stroke="#c5c5c5" stroke-width="1.4" stroke-linecap="round" stroke-linejoin="round" />
<path d="M85.2,174.4 l5.7,5.5 l-5.7,5.5" fill="none" stroke="#c5c5c5" stroke-width="1.4" stroke-linecap="round" stroke-linejoin="round" />
<path d="M85.2,201.9 l5.7,5.5 l-5.7,5.5" fill="none" stroke="#c5c5c5" stroke-width="1.4" stroke-linecap="round" stroke-linejoin="round" />
<path d="M85.2,229.4 l5.7,5.5 l-5.7,5.5" fill="none" stroke="#c5c5c5" stroke-width="1.4" stroke-linecap="round" stroke-linejoin="round" />
<g transform="translate(79.3 255.2) scale(0.566667)" ><path d="M14.25.18l.9.2.73.26.59.3.45.32.34.34.25.34.16.33.1.3.04.26.02.2-.01.13V8.5l-.05.63-.13.55-.21.46-.26.38-.3.31-.33.25-.35.19-.35.14-.33.1-.3.07-.26.04-.21.02H8.77l-.69.05-.59.14-.5.22-.41.27-.33.32-.27.35-.2.36-.15.37-.1.35-.07.32-.04.27-.02.21v3.06H3.17l-.21-.03-.28-.07-.32-.12-.35-.18-.36-.26-.36-.36-.35-.46-.32-.59-.28-.73-.21-.88-.14-1.05-.05-1.23.06-1.22.16-1.04.24-.87.32-.71.36-.57.4-.44.42-.33.42-.24.4-.16.36-.1.32-.05.24-.01h.16l.06.01h8.16v-.83H6.18l-.01-2.75-.02-.37.05-.34.11-.31.17-.28.25-.26.31-.23.38-.2.44-.18.51-.15.58-.12.64-.1.71-.06.77-.04.84-.02 1.27.05zm-6.3 1.98l-.23.33-.08.41.08.41.23.34.33.22.41.09.41-.09.33-.22.23-.34.08-.41-.08-.41-.23-.33-.33-.22-.41-.09-.41.09zm13.09 3.95l.28.06.32.12.35.18.36.27.36.35.35.47.32.59.28.73.21.88.14 1.04.05 1.23-.06 1.23-.16 1.04-.24.86-.32.71-.36.57-.4.45-.42.33-.42.24-.4.16-.36.09-.32.05-.24.02-.16-.01h-8.22v.82h5.84l.01 2.76.02.36-.05.34-.11.31-.17.29-.25.25-.31.24-.38.2-.44.17-.51.15-.58.13-.64.09-.71.07-.77.04-.84.01-1.27-.04-1.07-.14-.9-.2-.73-.25-.59-.3-.45-.33-.34-.34-.25-.34-.16-.33-.1-.3-.04-.25-.02-.2.01-.13v-5.34l.05-.64.13-.54.21-.46.26-.38.3-.32.33-.24.35-.2.35-.14.33-.1.3-.06.26-.04.21-.02.13-.01h5.84l.69-.05.59-.14.5-.21.41-.28.33-.32.27-.35.2-.36.15-.36.1-.35.07-.32.04-.28.02-.21V6.07h2.09l.14.01zm-6.47 14.25l-.23.33-.08.41.08.41.23.33.33.23.41.08.41-.08.33-.23.23-.33.08-.41-.08-.41-.23-.33-.33-.23-.41-.08-.41.08z" fill="#519fc4"/></g>
<g transform="translate(79.3 282.7) scale(0.566667)" ><path d="M14.25.18l.9.2.73.26.59.3.45.32.34.34.25.34.16.33.1.3.04.26.02.2-.01.13V8.5l-.05.63-.13.55-.21.46-.26.38-.3.31-.33.25-.35.19-.35.14-.33.1-.3.07-.26.04-.21.02H8.77l-.69.05-.59.14-.5.22-.41.27-.33.32-.27.35-.2.36-.15.37-.1.35-.07.32-.04.27-.02.21v3.06H3.17l-.21-.03-.28-.07-.32-.12-.35-.18-.36-.26-.36-.36-.35-.46-.32-.59-.28-.73-.21-.88-.14-1.05-.05-1.23.06-1.22.16-1.04.24-.87.32-.71.36-.57.4-.44.42-.33.42-.24.4-.16.36-.1.32-.05.24-.01h.16l.06.01h8.16v-.83H6.18l-.01-2.75-.02-.37.05-.34.11-.31.17-.28.25-.26.31-.23.38-.2.44-.18.51-.15.58-.12.64-.1.71-.06.77-.04.84-.02 1.27.05zm-6.3 1.98l-.23.33-.08.41.08.41.23.34.33.22.41.09.41-.09.33-.22.23-.34.08-.41-.08-.41-.23-.33-.33-.22-.41-.09-.41.09zm13.09 3.95l.28.06.32.12.35.18.36.27.36.35.35.47.32.59.28.73.21.88.14 1.04.05 1.23-.06 1.23-.16 1.04-.24.86-.32.71-.36.57-.4.45-.42.33-.42.24-.4.16-.36.09-.32.05-.24.02-.16-.01h-8.22v.82h5.84l.01 2.76.02.36-.05.34-.11.31-.17.29-.25.25-.31.24-.38.2-.44.17-.51.15-.58.13-.64.09-.71.07-.77.04-.84.01-1.27-.04-1.07-.14-.9-.2-.73-.25-.59-.3-.45-.33-.34-.34-.25-.34-.16-.33-.1-.3-.04-.25-.02-.2.01-.13v-5.34l.05-.64.13-.54.21-.46.26-.38.3-.32.33-.24.35-.2.35-.14.33-.1.3-.06.26-.04.21-.02.13-.01h5.84l.69-.05.59-.14.5-.21.41-.28.33-.32.27-.35.2-.36.15-.36.1-.35.07-.32.04-.28.02-.21V6.07h2.09l.14.01zm-6.47 14.25l-.23.33-.08.41.08.41.23.33.33.23.41.08.41-.08.33-.23.23-.33.08-.41-.08-.41-.23-.33-.33-.23-.41-.08-.41.08z" fill="#519fc4"/></g>
<g transform="translate(79.3 310.2) scale(0.566667)" ><path d="M14.25.18l.9.2.73.26.59.3.45.32.34.34.25.34.16.33.1.3.04.26.02.2-.01.13V8.5l-.05.63-.13.55-.21.46-.26.38-.3.31-.33.25-.35.19-.35.14-.33.1-.3.07-.26.04-.21.02H8.77l-.69.05-.59.14-.5.22-.41.27-.33.32-.27.35-.2.36-.15.37-.1.35-.07.32-.04.27-.02.21v3.06H3.17l-.21-.03-.28-.07-.32-.12-.35-.18-.36-.26-.36-.36-.35-.46-.32-.59-.28-.73-.21-.88-.14-1.05-.05-1.23.06-1.22.16-1.04.24-.87.32-.71.36-.57.4-.44.42-.33.42-.24.4-.16.36-.1.32-.05.24-.01h.16l.06.01h8.16v-.83H6.18l-.01-2.75-.02-.37.05-.34.11-.31.17-.28.25-.26.31-.23.38-.2.44-.18.51-.15.58-.12.64-.1.71-.06.77-.04.84-.02 1.27.05zm-6.3 1.98l-.23.33-.08.41.08.41.23.34.33.22.41.09.41-.09.33-.22.23-.34.08-.41-.08-.41-.23-.33-.33-.22-.41-.09-.41.09zm13.09 3.95l.28.06.32.12.35.18.36.27.36.35.35.47.32.59.28.73.21.88.14 1.04.05 1.23-.06 1.23-.16 1.04-.24.86-.32.71-.36.57-.4.45-.42.33-.42.24-.4.16-.36.09-.32.05-.24.02-.16-.01h-8.22v.82h5.84l.01 2.76.02.36-.05.34-.11.31-.17.29-.25.25-.31.24-.38.2-.44.17-.51.15-.58.13-.64.09-.71.07-.77.04-.84.01-1.27-.04-1.07-.14-.9-.2-.73-.25-.59-.3-.45-.33-.34-.34-.25-.34-.16-.33-.1-.3-.04-.25-.02-.2.01-.13v-5.34l.05-.64.13-.54.21-.46.26-.38.3-.32.33-.24.35-.2.35-.14.33-.1.3-.06.26-.04.21-.02.13-.01h5.84l.69-.05.59-.14.5-.21.41-.28.33-.32.27-.35.2-.36.15-.36.1-.35.07-.32.04-.28.02-.21V6.07h2.09l.14.01zm-6.47 14.25l-.23.33-.08.41.08.41.23.33.33.23.41.08.41-.08.33-.23.23-.33.08-.41-.08-.41-.23-.33-.33-.23-.41-.08-.41.08z" fill="#519fc4"/></g>
<g transform="translate(79.3 337.7) scale(0.566667)" ><path d="M14.25.18l.9.2.73.26.59.3.45.32.34.34.25.34.16.33.1.3.04.26.02.2-.01.13V8.5l-.05.63-.13.55-.21.46-.26.38-.3.31-.33.25-.35.19-.35.14-.33.1-.3.07-.26.04-.21.02H8.77l-.69.05-.59.14-.5.22-.41.27-.33.32-.27.35-.2.36-.15.37-.1.35-.07.32-.04.27-.02.21v3.06H3.17l-.21-.03-.28-.07-.32-.12-.35-.18-.36-.26-.36-.36-.35-.46-.32-.59-.28-.73-.21-.88-.14-1.05-.05-1.23.06-1.22.16-1.04.24-.87.32-.71.36-.57.4-.44.42-.33.42-.24.4-.16.36-.1.32-.05.24-.01h.16l.06.01h8.16v-.83H6.18l-.01-2.75-.02-.37.05-.34.11-.31.17-.28.25-.26.31-.23.38-.2.44-.18.51-.15.58-.12.64-.1.71-.06.77-.04.84-.02 1.27.05zm-6.3 1.98l-.23.33-.08.41.08.41.23.34.33.22.41.09.41-.09.33-.22.23-.34.08-.41-.08-.41-.23-.33-.33-.22-.41-.09-.41.09zm13.09 3.95l.28.06.32.12.35.18.36.27.36.35.35.47.32.59.28.73.21.88.14 1.04.05 1.23-.06 1.23-.16 1.04-.24.86-.32.71-.36.57-.4.45-.42.33-.42.24-.4.16-.36.09-.32.05-.24.02-.16-.01h-8.22v.82h5.84l.01 2.76.02.36-.05.34-.11.31-.17.29-.25.25-.31.24-.38.2-.44.17-.51.15-.58.13-.64.09-.71.07-.77.04-.84.01-1.27-.04-1.07-.14-.9-.2-.73-.25-.59-.3-.45-.33-.34-.34-.25-.34-.16-.33-.1-.3-.04-.25-.02-.2.01-.13v-5.34l.05-.64.13-.54.21-.46.26-.38.3-.32.33-.24.35-.2.35-.14.33-.1.3-.06.26-.04.21-.02.13-.01h5.84l.69-.05.59-.14.5-.21.41-.28.33-.32.27-.35.2-.36.15-.36.1-.35.07-.32.04-.28.02-.21V6.07h2.09l.14.01zm-6.47 14.25l-.23.33-.08.41.08.41.23.33.33.23.41.08.41-.08.33-.23.23-.33.08-.41-.08-.41-.23-.33-.33-.23-.41-.08-.41.08z" fill="#519fc4"/></g>
<g transform="translate(79.3 365.2) scale(0.566667)" ><path d="M14.25.18l.9.2.73.26.59.3.45.32.34.34.25.34.16.33.1.3.04.26.02.2-.01.13V8.5l-.05.63-.13.55-.21.46-.26.38-.3.31-.33.25-.35.19-.35.14-.33.1-.3.07-.26.04-.21.02H8.77l-.69.05-.59.14-.5.22-.41.27-.33.32-.27.35-.2.36-.15.37-.1.35-.07.32-.04.27-.02.21v3.06H3.17l-.21-.03-.28-.07-.32-.12-.35-.18-.36-.26-.36-.36-.35-.46-.32-.59-.28-.73-.21-.88-.14-1.05-.05-1.23.06-1.22.16-1.04.24-.87.32-.71.36-.57.4-.44.42-.33.42-.24.4-.16.36-.1.32-.05.24-.01h.16l.06.01h8.16v-.83H6.18l-.01-2.75-.02-.37.05-.34.11-.31.17-.28.25-.26.31-.23.38-.2.44-.18.51-.15.58-.12.64-.1.71-.06.77-.04.84-.02 1.27.05zm-6.3 1.98l-.23.33-.08.41.08.41.23.34.33.22.41.09.41-.09.33-.22.23-.34.08-.41-.08-.41-.23-.33-.33-.22-.41-.09-.41.09zm13.09 3.95l.28.06.32.12.35.18.36.27.36.35.35.47.32.59.28.73.21.88.14 1.04.05 1.23-.06 1.23-.16 1.04-.24.86-.32.71-.36.57-.4.45-.42.33-.42.24-.4.16-.36.09-.32.05-.24.02-.16-.01h-8.22v.82h5.84l.01 2.76.02.36-.05.34-.11.31-.17.29-.25.25-.31.24-.38.2-.44.17-.51.15-.58.13-.64.09-.71.07-.77.04-.84.01-1.27-.04-1.07-.14-.9-.2-.73-.25-.59-.3-.45-.33-.34-.34-.25-.34-.16-.33-.1-.3-.04-.25-.02-.2.01-.13v-5.34l.05-.64.13-.54.21-.46.26-.38.3-.32.33-.24.35-.2.35-.14.33-.1.3-.06.26-.04.21-.02.13-.01h5.84l.69-.05.59-.14.5-.21.41-.28.33-.32.27-.35.2-.36.15-.36.1-.35.07-.32.04-.28.02-.21V6.07h2.09l.14.01zm-6.47 14.25l-.23.33-.08.41.08.41.23.33.33.23.41.08.41-.08.33-.23.23-.33.08-.41-.08-.41-.23-.33-.33-.23-.41-.08-.41.08z" fill="#519fc4"/></g>
<g transform="translate(79.3 392.7) scale(0.566667)" ><path d="M14.25.18l.9.2.73.26.59.3.45.32.34.34.25.34.16.33.1.3.04.26.02.2-.01.13V8.5l-.05.63-.13.55-.21.46-.26.38-.3.31-.33.25-.35.19-.35.14-.33.1-.3.07-.26.04-.21.02H8.77l-.69.05-.59.14-.5.22-.41.27-.33.32-.27.35-.2.36-.15.37-.1.35-.07.32-.04.27-.02.21v3.06H3.17l-.21-.03-.28-.07-.32-.12-.35-.18-.36-.26-.36-.36-.35-.46-.32-.59-.28-.73-.21-.88-.14-1.05-.05-1.23.06-1.22.16-1.04.24-.87.32-.71.36-.57.4-.44.42-.33.42-.24.4-.16.36-.1.32-.05.24-.01h.16l.06.01h8.16v-.83H6.18l-.01-2.75-.02-.37.05-.34.11-.31.17-.28.25-.26.31-.23.38-.2.44-.18.51-.15.58-.12.64-.1.71-.06.77-.04.84-.02 1.27.05zm-6.3 1.98l-.23.33-.08.41.08.41.23.34.33.22.41.09.41-.09.33-.22.23-.34.08-.41-.08-.41-.23-.33-.33-.22-.41-.09-.41.09zm13.09 3.95l.28.06.32.12.35.18.36.27.36.35.35.47.32.59.28.73.21.88.14 1.04.05 1.23-.06 1.23-.16 1.04-.24.86-.32.71-.36.57-.4.45-.42.33-.42.24-.4.16-.36.09-.32.05-.24.02-.16-.01h-8.22v.82h5.84l.01 2.76.02.36-.05.34-.11.31-.17.29-.25.25-.31.24-.38.2-.44.17-.51.15-.58.13-.64.09-.71.07-.77.04-.84.01-1.27-.04-1.07-.14-.9-.2-.73-.25-.59-.3-.45-.33-.34-.34-.25-.34-.16-.33-.1-.3-.04-.25-.02-.2.01-.13v-5.34l.05-.64.13-.54.21-.46.26-.38.3-.32.33-.24.35-.2.35-.14.33-.1.3-.06.26-.04.21-.02.13-.01h5.84l.69-.05.59-.14.5-.21.41-.28.33-.32.27-.35.2-.36.15-.36.1-.35.07-.32.04-.28.02-.21V6.07h2.09l.14.01zm-6.47 14.25l-.23.33-.08.41.08.41.23.33.33.23.41.08.41-.08.33-.23.23-.33.08-.41-.08-.41-.23-.33-.33-.23-.41-.08-.41.08z" fill="#519fc4"/></g>
<g transform="translate(79.3 420.2) scale(0.566667)" ><path d="M14.25.18l.9.2.73.26.59.3.45.32.34.34.25.34.16.33.1.3.04.26.02.2-.01.13V8.5l-.05.63-.13.55-.21.46-.26.38-.3.31-.33.25-.35.19-.35.14-.33.1-.3.07-.26.04-.21.02H8.77l-.69.05-.59.14-.5.22-.41.27-.33.32-.27.35-.2.36-.15.37-.1.35-.07.32-.04.27-.02.21v3.06H3.17l-.21-.03-.28-.07-.32-.12-.35-.18-.36-.26-.36-.36-.35-.46-.32-.59-.28-.73-.21-.88-.14-1.05-.05-1.23.06-1.22.16-1.04.24-.87.32-.71.36-.57.4-.44.42-.33.42-.24.4-.16.36-.1.32-.05.24-.01h.16l.06.01h8.16v-.83H6.18l-.01-2.75-.02-.37.05-.34.11-.31.17-.28.25-.26.31-.23.38-.2.44-.18.51-.15.58-.12.64-.1.71-.06.77-.04.84-.02 1.27.05zm-6.3 1.98l-.23.33-.08.41.08.41.23.34.33.22.41.09.41-.09.33-.22.23-.34.08-.41-.08-.41-.23-.33-.33-.22-.41-.09-.41.09zm13.09 3.95l.28.06.32.12.35.18.36.27.36.35.35.47.32.59.28.73.21.88.14 1.04.05 1.23-.06 1.23-.16 1.04-.24.86-.32.71-.36.57-.4.45-.42.33-.42.24-.4.16-.36.09-.32.05-.24.02-.16-.01h-8.22v.82h5.84l.01 2.76.02.36-.05.34-.11.31-.17.29-.25.25-.31.24-.38.2-.44.17-.51.15-.58.13-.64.09-.71.07-.77.04-.84.01-1.27-.04-1.07-.14-.9-.2-.73-.25-.59-.3-.45-.33-.34-.34-.25-.34-.16-.33-.1-.3-.04-.25-.02-.2.01-.13v-5.34l.05-.64.13-.54.21-.46.26-.38.3-.32.33-.24.35-.2.35-.14.33-.1.3-.06.26-.04.21-.02.13-.01h5.84l.69-.05.59-.14.5-.21.41-.28.33-.32.27-.35.2-.36.15-.36.1-.35.07-.32.04-.28.02-.21V6.07h2.09l.14.01zm-6.47 14.25l-.23.33-.08.41.08.41.23.33.33.23.41.08.41-.08.33-.23.23-.33.08-.41-.08-.41-.23-.33-.33-.23-.41-.08-.41.08z" fill="#519fc4"/></g>
<g transform="translate(79.3 447.7) scale(0.566667)" ><path d="M14.25.18l.9.2.73.26.59.3.45.32.34.34.25.34.16.33.1.3.04.26.02.2-.01.13V8.5l-.05.63-.13.55-.21.46-.26.38-.3.31-.33.25-.35.19-.35.14-.33.1-.3.07-.26.04-.21.02H8.77l-.69.05-.59.14-.5.22-.41.27-.33.32-.27.35-.2.36-.15.37-.1.35-.07.32-.04.27-.02.21v3.06H3.17l-.21-.03-.28-.07-.32-.12-.35-.18-.36-.26-.36-.36-.35-.46-.32-.59-.28-.73-.21-.88-.14-1.05-.05-1.23.06-1.22.16-1.04.24-.87.32-.71.36-.57.4-.44.42-.33.42-.24.4-.16.36-.1.32-.05.24-.01h.16l.06.01h8.16v-.83H6.18l-.01-2.75-.02-.37.05-.34.11-.31.17-.28.25-.26.31-.23.38-.2.44-.18.51-.15.58-.12.64-.1.71-.06.77-.04.84-.02 1.27.05zm-6.3 1.98l-.23.33-.08.41.08.41.23.34.33.22.41.09.41-.09.33-.22.23-.34.08-.41-.08-.41-.23-.33-.33-.22-.41-.09-.41.09zm13.09 3.95l.28.06.32.12.35.18.36.27.36.35.35.47.32.59.28.73.21.88.14 1.04.05 1.23-.06 1.23-.16 1.04-.24.86-.32.71-.36.57-.4.45-.42.33-.42.24-.4.16-.36.09-.32.05-.24.02-.16-.01h-8.22v.82h5.84l.01 2.76.02.36-.05.34-.11.31-.17.29-.25.25-.31.24-.38.2-.44.17-.51.15-.58.13-.64.09-.71.07-.77.04-.84.01-1.27-.04-1.07-.14-.9-.2-.73-.25-.59-.3-.45-.33-.34-.34-.25-.34-.16-.33-.1-.3-.04-.25-.02-.2.01-.13v-5.34l.05-.64.13-.54.21-.46.26-.38.3-.32.33-.24.35-.2.35-.14.33-.1.3-.06.26-.04.21-.02.13-.01h5.84l.69-.05.59-.14.5-.21.41-.28.33-.32.27-.35.2-.36.15-.36.1-.35.07-.32.04-.28.02-.21V6.07h2.09l.14.01zm-6.47 14.25l-.23.33-.08.41.08.41.23.33.33.23.41.08.41-.08.33-.23.23-.33.08-.41-.08-.41-.23-.33-.33-.23-.41-.08-.41.08z" fill="#519fc4"/></g>
<g transform="translate(79.3 475.2) scale(0.566667)" ><path d="M14.25.18l.9.2.73.26.59.3.45.32.34.34.25.34.16.33.1.3.04.26.02.2-.01.13V8.5l-.05.63-.13.55-.21.46-.26.38-.3.31-.33.25-.35.19-.35.14-.33.1-.3.07-.26.04-.21.02H8.77l-.69.05-.59.14-.5.22-.41.27-.33.32-.27.35-.2.36-.15.37-.1.35-.07.32-.04.27-.02.21v3.06H3.17l-.21-.03-.28-.07-.32-.12-.35-.18-.36-.26-.36-.36-.35-.46-.32-.59-.28-.73-.21-.88-.14-1.05-.05-1.23.06-1.22.16-1.04.24-.87.32-.71.36-.57.4-.44.42-.33.42-.24.4-.16.36-.1.32-.05.24-.01h.16l.06.01h8.16v-.83H6.18l-.01-2.75-.02-.37.05-.34.11-.31.17-.28.25-.26.31-.23.38-.2.44-.18.51-.15.58-.12.64-.1.71-.06.77-.04.84-.02 1.27.05zm-6.3 1.98l-.23.33-.08.41.08.41.23.34.33.22.41.09.41-.09.33-.22.23-.34.08-.41-.08-.41-.23-.33-.33-.22-.41-.09-.41.09zm13.09 3.95l.28.06.32.12.35.18.36.27.36.35.35.47.32.59.28.73.21.88.14 1.04.05 1.23-.06 1.23-.16 1.04-.24.86-.32.71-.36.57-.4.45-.42.33-.42.24-.4.16-.36.09-.32.05-.24.02-.16-.01h-8.22v.82h5.84l.01 2.76.02.36-.05.34-.11.31-.17.29-.25.25-.31.24-.38.2-.44.17-.51.15-.58.13-.64.09-.71.07-.77.04-.84.01-1.27-.04-1.07-.14-.9-.2-.73-.25-.59-.3-.45-.33-.34-.34-.25-.34-.16-.33-.1-.3-.04-.25-.02-.2.01-.13v-5.34l.05-.64.13-.54.21-.46.26-.38.3-.32.33-.24.35-.2.35-.14.33-.1.3-.06.26-.04.21-.02.13-.01h5.84l.69-.05.59-.14.5-.21.41-.28.33-.32.27-.35.2-.36.15-.36.1-.35.07-.32.04-.28.02-.21V6.07h2.09l.14.01zm-6.47 14.25l-.23.33-.08.41.08.41.23.33.33.23.41.08.41-.08.33-.23.23-.33.08-.41-.08-.41-.23-.33-.33-.23-.41-.08-.41.08z" fill="#519fc4"/></g>
<path d="M76,504.4 l5.7,5.5 l-5.7,5.5" fill="none" stroke="#c5c5c5" stroke-width="1.4" stroke-linecap="round" stroke-linejoin="round" />
<path d="M76,531.9 l5.7,5.5 l-5.7,5.5" fill="none" stroke="#c5c5c5" stroke-width="1.4" stroke-linecap="round" stroke-linejoin="round" />
<path d="M76,559.4 l5.7,5.5 l-5.7,5.5" fill="none" stroke="#c5c5c5" stroke-width="1.4" stroke-linecap="round" stroke-linejoin="round" />
<path d="M72.1,588.8 l5.4,5.4 l5.4,-5.4" fill="none" stroke="#c5c5c5" stroke-width="1.4" stroke-linecap="round" stroke-linejoin="round" />
<path d="M81.8,616.3 l5.4,5.4 l5.4,-5.4" fill="none" stroke="#c5c5c5" stroke-width="1.4" stroke-linecap="round" stroke-linejoin="round" />
<path d="M95.2,642.5 l-4.2,4.45 l4.2,4.45 M97.7,642.5 l4.2,4.45 l-4.2,4.45" fill="none" stroke="#e8772e" stroke-width="1.85" stroke-linecap="butt" stroke-linejoin="miter" />
<path d="M95.2,670 l-4.2,4.45 l4.2,4.45 M97.7,670 l4.2,4.45 l-4.2,4.45" fill="none" stroke="#e8772e" stroke-width="1.85" stroke-linecap="butt" stroke-linejoin="miter" />
<path d="M95.2,697.5 l-4.2,4.45 l4.2,4.45 M97.7,697.5 l4.2,4.45 l-4.2,4.45" fill="none" stroke="#e8772e" stroke-width="1.85" stroke-linecap="butt" stroke-linejoin="miter" />
<path d="M95.2,725 l-4.2,4.45 l4.2,4.45 M97.7,725 l4.2,4.45 l-4.2,4.45" fill="none" stroke="#e8772e" stroke-width="1.85" stroke-linecap="butt" stroke-linejoin="miter" />
<path d="M95.2,752.5 l-4.2,4.45 l4.2,4.45 M97.7,752.5 l4.2,4.45 l-4.2,4.45" fill="none" stroke="#e8772e" stroke-width="1.85" stroke-linecap="butt" stroke-linejoin="miter" />
<path d="M95.2,780 l-4.2,4.45 l4.2,4.45 M97.7,780 l4.2,4.45 l-4.2,4.45" fill="none" stroke="#e8772e" stroke-width="1.85" stroke-linecap="butt" stroke-linejoin="miter" />
<path d="M95.2,807.5 l-4.2,4.45 l4.2,4.45 M97.7,807.5 l4.2,4.45 l-4.2,4.45" fill="none" stroke="#e8772e" stroke-width="1.85" stroke-linecap="butt" stroke-linejoin="miter" />
<path d="M95.2,835 l-4.2,4.45 l4.2,4.45 M97.7,835 l4.2,4.45 l-4.2,4.45" fill="none" stroke="#e8772e" stroke-width="1.85" stroke-linecap="butt" stroke-linejoin="miter" />
<path d="M95.2,862.5 l-4.2,4.45 l4.2,4.45 M97.7,862.5 l4.2,4.45 l-4.2,4.45" fill="none" stroke="#e8772e" stroke-width="1.85" stroke-linecap="butt" stroke-linejoin="miter" />
<path d="M81.8,891.3 l5.4,5.4 l5.4,-5.4" fill="none" stroke="#c5c5c5" stroke-width="1.4" stroke-linecap="round" stroke-linejoin="round" />
<path d="M95.2,917.5 l-4.2,4.45 l4.2,4.45 M97.7,917.5 l4.2,4.45 l-4.2,4.45" fill="none" stroke="#e8772e" stroke-width="1.85" stroke-linecap="butt" stroke-linejoin="miter" />
<path d="M63.9,952.8 l5.7,5.5 l-5.7,5.5" fill="none" stroke="#c5c5c5" stroke-width="1.4" stroke-linecap="round" stroke-linejoin="round" />
<path d="M63.9,980 l5.7,5.5 l-5.7,5.5" fill="none" stroke="#c5c5c5" stroke-width="1.4" stroke-linecap="round" stroke-linejoin="round" />
<g transform="translate(362.7 53.9) scale(0.5875)" ><path d="M14.25.18l.9.2.73.26.59.3.45.32.34.34.25.34.16.33.1.3.04.26.02.2-.01.13V8.5l-.05.63-.13.55-.21.46-.26.38-.3.31-.33.25-.35.19-.35.14-.33.1-.3.07-.26.04-.21.02H8.77l-.69.05-.59.14-.5.22-.41.27-.33.32-.27.35-.2.36-.15.37-.1.35-.07.32-.04.27-.02.21v3.06H3.17l-.21-.03-.28-.07-.32-.12-.35-.18-.36-.26-.36-.36-.35-.46-.32-.59-.28-.73-.21-.88-.14-1.05-.05-1.23.06-1.22.16-1.04.24-.87.32-.71.36-.57.4-.44.42-.33.42-.24.4-.16.36-.1.32-.05.24-.01h.16l.06.01h8.16v-.83H6.18l-.01-2.75-.02-.37.05-.34.11-.31.17-.28.25-.26.31-.23.38-.2.44-.18.51-.15.58-.12.64-.1.71-.06.77-.04.84-.02 1.27.05zm-6.3 1.98l-.23.33-.08.41.08.41.23.34.33.22.41.09.41-.09.33-.22.23-.34.08-.41-.08-.41-.23-.33-.33-.22-.41-.09-.41.09zm13.09 3.95l.28.06.32.12.35.18.36.27.36.35.35.47.32.59.28.73.21.88.14 1.04.05 1.23-.06 1.23-.16 1.04-.24.86-.32.71-.36.57-.4.45-.42.33-.42.24-.4.16-.36.09-.32.05-.24.02-.16-.01h-8.22v.82h5.84l.01 2.76.02.36-.05.34-.11.31-.17.29-.25.25-.31.24-.38.2-.44.17-.51.15-.58.13-.64.09-.71.07-.77.04-.84.01-1.27-.04-1.07-.14-.9-.2-.73-.25-.59-.3-.45-.33-.34-.34-.25-.34-.16-.33-.1-.3-.04-.25-.02-.2.01-.13v-5.34l.05-.64.13-.54.21-.46.26-.38.3-.32.33-.24.35-.2.35-.14.33-.1.3-.06.26-.04.21-.02.13-.01h5.84l.69-.05.59-.14.5-.21.41-.28.33-.32.27-.35.2-.36.15-.36.1-.35.07-.32.04-.28.02-.21V6.07h2.09l.14.01zm-6.47 14.25l-.23.33-.08.41.08.41.23.33.33.23.41.08.41-.08.33-.23.23-.33.08-.41-.08-.41-.23-.33-.33-.23-.41-.08-.41.08z" fill="#519fc4"/></g>
<g transform="translate(515.9 53.9) scale(0.5875)" ><path d="M14.25.18l.9.2.73.26.59.3.45.32.34.34.25.34.16.33.1.3.04.26.02.2-.01.13V8.5l-.05.63-.13.55-.21.46-.26.38-.3.31-.33.25-.35.19-.35.14-.33.1-.3.07-.26.04-.21.02H8.77l-.69.05-.59.14-.5.22-.41.27-.33.32-.27.35-.2.36-.15.37-.1.35-.07.32-.04.27-.02.21v3.06H3.17l-.21-.03-.28-.07-.32-.12-.35-.18-.36-.26-.36-.36-.35-.46-.32-.59-.28-.73-.21-.88-.14-1.05-.05-1.23.06-1.22.16-1.04.24-.87.32-.71.36-.57.4-.44.42-.33.42-.24.4-.16.36-.1.32-.05.24-.01h.16l.06.01h8.16v-.83H6.18l-.01-2.75-.02-.37.05-.34.11-.31.17-.28.25-.26.31-.23.38-.2.44-.18.51-.15.58-.12.64-.1.71-.06.77-.04.84-.02 1.27.05zm-6.3 1.98l-.23.33-.08.41.08.41.23.34.33.22.41.09.41-.09.33-.22.23-.34.08-.41-.08-.41-.23-.33-.33-.22-.41-.09-.41.09zm13.09 3.95l.28.06.32.12.35.18.36.27.36.35.35.47.32.59.28.73.21.88.14 1.04.05 1.23-.06 1.23-.16 1.04-.24.86-.32.71-.36.57-.4.45-.42.33-.42.24-.4.16-.36.09-.32.05-.24.02-.16-.01h-8.22v.82h5.84l.01 2.76.02.36-.05.34-.11.31-.17.29-.25.25-.31.24-.38.2-.44.17-.51.15-.58.13-.64.09-.71.07-.77.04-.84.01-1.27-.04-1.07-.14-.9-.2-.73-.25-.59-.3-.45-.33-.34-.34-.25-.34-.16-.33-.1-.3-.04-.25-.02-.2.01-.13v-5.34l.05-.64.13-.54.21-.46.26-.38.3-.32.33-.24.35-.2.35-.14.33-.1.3-.06.26-.04.21-.02.13-.01h5.84l.69-.05.59-.14.5-.21.41-.28.33-.32.27-.35.2-.36.15-.36.1-.35.07-.32.04-.28.02-.21V6.07h2.09l.14.01zm-6.47 14.25l-.23.33-.08.41.08.41.23.33.33.23.41.08.41-.08.33-.23.23-.33.08-.41-.08-.41-.23-.33-.33-.23-.41-.08-.41.08z" fill="#519fc4"/></g>
<g transform="translate(665.9 53.9) scale(0.5875)" ><path d="M14.25.18l.9.2.73.26.59.3.45.32.34.34.25.34.16.33.1.3.04.26.02.2-.01.13V8.5l-.05.63-.13.55-.21.46-.26.38-.3.31-.33.25-.35.19-.35.14-.33.1-.3.07-.26.04-.21.02H8.77l-.69.05-.59.14-.5.22-.41.27-.33.32-.27.35-.2.36-.15.37-.1.35-.07.32-.04.27-.02.21v3.06H3.17l-.21-.03-.28-.07-.32-.12-.35-.18-.36-.26-.36-.36-.35-.46-.32-.59-.28-.73-.21-.88-.14-1.05-.05-1.23.06-1.22.16-1.04.24-.87.32-.71.36-.57.4-.44.42-.33.42-.24.4-.16.36-.1.32-.05.24-.01h.16l.06.01h8.16v-.83H6.18l-.01-2.75-.02-.37.05-.34.11-.31.17-.28.25-.26.31-.23.38-.2.44-.18.51-.15.58-.12.64-.1.71-.06.77-.04.84-.02 1.27.05zm-6.3 1.98l-.23.33-.08.41.08.41.23.34.33.22.41.09.41-.09.33-.22.23-.34.08-.41-.08-.41-.23-.33-.33-.22-.41-.09-.41.09zm13.09 3.95l.28.06.32.12.35.18.36.27.36.35.35.47.32.59.28.73.21.88.14 1.04.05 1.23-.06 1.23-.16 1.04-.24.86-.32.71-.36.57-.4.45-.42.33-.42.24-.4.16-.36.09-.32.05-.24.02-.16-.01h-8.22v.82h5.84l.01 2.76.02.36-.05.34-.11.31-.17.29-.25.25-.31.24-.38.2-.44.17-.51.15-.58.13-.64.09-.71.07-.77.04-.84.01-1.27-.04-1.07-.14-.9-.2-.73-.25-.59-.3-.45-.33-.34-.34-.25-.34-.16-.33-.1-.3-.04-.25-.02-.2.01-.13v-5.34l.05-.64.13-.54.21-.46.26-.38.3-.32.33-.24.35-.2.35-.14.33-.1.3-.06.26-.04.21-.02.13-.01h5.84l.69-.05.59-.14.5-.21.41-.28.33-.32.27-.35.2-.36.15-.36.1-.35.07-.32.04-.28.02-.21V6.07h2.09l.14.01zm-6.47 14.25l-.23.33-.08.41.08.41.23.33.33.23.41.08.41-.08.33-.23.23-.33.08-.41-.08-.41-.23-.33-.33-.23-.41-.08-.41.08z" fill="#519fc4"/></g>
<g transform="translate(815.9 53.9) scale(0.5875)" ><path d="M14.25.18l.9.2.73.26.59.3.45.32.34.34.25.34.16.33.1.3.04.26.02.2-.01.13V8.5l-.05.63-.13.55-.21.46-.26.38-.3.31-.33.25-.35.19-.35.14-.33.1-.3.07-.26.04-.21.02H8.77l-.69.05-.59.14-.5.22-.41.27-.33.32-.27.35-.2.36-.15.37-.1.35-.07.32-.04.27-.02.21v3.06H3.17l-.21-.03-.28-.07-.32-.12-.35-.18-.36-.26-.36-.36-.35-.46-.32-.59-.28-.73-.21-.88-.14-1.05-.05-1.23.06-1.22.16-1.04.24-.87.32-.71.36-.57.4-.44.42-.33.42-.24.4-.16.36-.1.32-.05.24-.01h.16l.06.01h8.16v-.83H6.18l-.01-2.75-.02-.37.05-.34.11-.31.17-.28.25-.26.31-.23.38-.2.44-.18.51-.15.58-.12.64-.1.71-.06.77-.04.84-.02 1.27.05zm-6.3 1.98l-.23.33-.08.41.08.41.23.34.33.22.41.09.41-.09.33-.22.23-.34.08-.41-.08-.41-.23-.33-.33-.22-.41-.09-.41.09zm13.09 3.95l.28.06.32.12.35.18.36.27.36.35.35.47.32.59.28.73.21.88.14 1.04.05 1.23-.06 1.23-.16 1.04-.24.86-.32.71-.36.57-.4.45-.42.33-.42.24-.4.16-.36.09-.32.05-.24.02-.16-.01h-8.22v.82h5.84l.01 2.76.02.36-.05.34-.11.31-.17.29-.25.25-.31.24-.38.2-.44.17-.51.15-.58.13-.64.09-.71.07-.77.04-.84.01-1.27-.04-1.07-.14-.9-.2-.73-.25-.59-.3-.45-.33-.34-.34-.25-.34-.16-.33-.1-.3-.04-.25-.02-.2.01-.13v-5.34l.05-.64.13-.54.21-.46.26-.38.3-.32.33-.24.35-.2.35-.14.33-.1.3-.06.26-.04.21-.02.13-.01h5.84l.69-.05.59-.14.5-.21.41-.28.33-.32.27-.35.2-.36.15-.36.1-.35.07-.32.04-.28.02-.21V6.07h2.09l.14.01zm-6.47 14.25l-.23.33-.08.41.08.41.23.33.33.23.41.08.41-.08.33-.23.23-.33.08-.41-.08-.41-.23-.33-.33-.23-.41-.08-.41.08z" fill="#519fc4"/></g>
<path d="M976.5,56.5 l-4.2,4.45 l4.2,4.45 M979,56.5 l4.2,4.45 l-4.2,4.45" fill="none" stroke="#e8772e" stroke-width="1.85" stroke-linecap="butt" stroke-linejoin="miter" />
<g transform="translate(1120.9 53.9) scale(0.5875)" ><path d="M14.25.18l.9.2.73.26.59.3.45.32.34.34.25.34.16.33.1.3.04.26.02.2-.01.13V8.5l-.05.63-.13.55-.21.46-.26.38-.3.31-.33.25-.35.19-.35.14-.33.1-.3.07-.26.04-.21.02H8.77l-.69.05-.59.14-.5.22-.41.27-.33.32-.27.35-.2.36-.15.37-.1.35-.07.32-.04.27-.02.21v3.06H3.17l-.21-.03-.28-.07-.32-.12-.35-.18-.36-.26-.36-.36-.35-.46-.32-.59-.28-.73-.21-.88-.14-1.05-.05-1.23.06-1.22.16-1.04.24-.87.32-.71.36-.57.4-.44.42-.33.42-.24.4-.16.36-.1.32-.05.24-.01h.16l.06.01h8.16v-.83H6.18l-.01-2.75-.02-.37.05-.34.11-.31.17-.28.25-.26.31-.23.38-.2.44-.18.51-.15.58-.12.64-.1.71-.06.77-.04.84-.02 1.27.05zm-6.3 1.98l-.23.33-.08.41.08.41.23.34.33.22.41.09.41-.09.33-.22.23-.34.08-.41-.08-.41-.23-.33-.33-.22-.41-.09-.41.09zm13.09 3.95l.28.06.32.12.35.18.36.27.36.35.35.47.32.59.28.73.21.88.14 1.04.05 1.23-.06 1.23-.16 1.04-.24.86-.32.71-.36.57-.4.45-.42.33-.42.24-.4.16-.36.09-.32.05-.24.02-.16-.01h-8.22v.82h5.84l.01 2.76.02.36-.05.34-.11.31-.17.29-.25.25-.31.24-.38.2-.44.17-.51.15-.58.13-.64.09-.71.07-.77.04-.84.01-1.27-.04-1.07-.14-.9-.2-.73-.25-.59-.3-.45-.33-.34-.34-.25-.34-.16-.33-.1-.3-.04-.25-.02-.2.01-.13v-5.34l.05-.64.13-.54.21-.46.26-.38.3-.32.33-.24.35-.2.35-.14.33-.1.3-.06.26-.04.21-.02.13-.01h5.84l.69-.05.59-.14.5-.21.41-.28.33-.32.27-.35.2-.36.15-.36.1-.35.07-.32.04-.28.02-.21V6.07h2.09l.14.01zm-6.47 14.25l-.23.33-.08.41.08.41.23.33.33.23.41.08.41-.08.33-.23.23-.33.08-.41-.08-.41-.23-.33-.33-.23-.41-.08-.41.08z" fill="#519fc4"/></g>
<path d="M1277.3,56.5 l-4.2,4.45 l4.2,4.45 M1279.8,56.5 l4.2,4.45 l-4.2,4.45" fill="none" stroke="#e8772e" stroke-width="1.85" stroke-linecap="butt" stroke-linejoin="miter" />
<path d="M1427.1,56.5 l-4.2,4.45 l4.2,4.45 M1429.6,56.5 l4.2,4.45 l-4.2,4.45" fill="none" stroke="#e8772e" stroke-width="1.85" stroke-linecap="butt" stroke-linejoin="miter" />
<path d="M1080.2,57.2 L1091.2,68.2 M1091.2,57.2 L1080.2,68.2" fill="none" stroke="#fff" stroke-width="1.5" stroke-linecap="round" stroke-linejoin="round" />
<path d="M1815,56.3 a1,1 0 0 1 1.5,-0.9 L1827.3,61.2 a1,1 0 0 1 0,1.7 L1816.5,68.7 a1,1 0 0 1 -1.5,-0.9z" fill="none" stroke="#ccc" stroke-width="1.4" stroke-linecap="round" stroke-linejoin="round" />
<rect x="1844.7" y="54" width="16.6" height="16" rx="3" fill="none" stroke="#ccc" stroke-width="1.5" />
<path d="M1853,54 v16" fill="none" stroke="#ccc" stroke-width="1.5" stroke-linecap="round" stroke-linejoin="round" />
<circle cx="1879.9" cy="62" r="1.3" fill="#ccc"  />
<circle cx="1885.4" cy="62" r="1.3" fill="#ccc"  />
<circle cx="1890.9" cy="62" r="1.3" fill="#ccc"  />
<path d="M443.9,93.8 l5.7,5.3 l-5.7,5.3" fill="none" stroke="#a9a9a9" stroke-width="1.3" stroke-linecap="round" stroke-linejoin="round" />
<path d="M518.4,93.8 l5.7,5.3 l-5.7,5.3" fill="none" stroke="#a9a9a9" stroke-width="1.3" stroke-linecap="round" stroke-linejoin="round" />
<path d="M541.5,92.5 l-4.2,4.45 l4.2,4.45 M544,92.5 l4.2,4.45 l-4.2,4.45" fill="none" stroke="#e8772e" stroke-width="1.85" stroke-linecap="butt" stroke-linejoin="miter" />
<path d="M1754.6,789.6 V805.4 M1746.7,797.5 H1762.5" fill="none" stroke="#ccc" stroke-width="1.4" stroke-linecap="round" stroke-linejoin="round" />
<path d="M1770.9,795.3 l4.4,4.7 l4.4,-4.7" fill="none" stroke="#ccc" stroke-width="1.3" stroke-linecap="round" stroke-linejoin="round" />
<circle cx="1798.5" cy="797.8" r="1.3" fill="#ccc"  />
<circle cx="1804" cy="797.8" r="1.3" fill="#ccc"  />
<circle cx="1809.5" cy="797.8" r="1.3" fill="#ccc"  />
<path d="M1845.6,794 v-2.5 a1.5,1.5 0 0 1 1.5,-1.5 h2.6 M1855.9,790 h2.6 a1.5,1.5 0 0 1 1.5,1.5 v2.5 M1860,800 v2.5 a1.5,1.5 0 0 1 -1.5,1.5 h-2.6 M1849.7,804 h-2.6 a1.5,1.5 0 0 1 -1.5,-1.5 v-2.5" fill="none" stroke="#ccc" stroke-width="1.5" stroke-linecap="round" stroke-linejoin="round" />
<path d="M1879.6,791.5 L1891.2,803.1 M1891.2,791.5 L1879.6,803.1" fill="none" stroke="#ccc" stroke-width="1.4" stroke-linecap="round" stroke-linejoin="round" />
<rect x="1762" y="824.8" width="17" height="16.4" rx="3" fill="none" stroke="#ccc" stroke-width="1.5" />
<path d="M1765.3,829.3 l3.6,3.4 l-3.6,3.4 M1770.6,837 h5" fill="none" stroke="#ccc" stroke-width="1.4" stroke-linecap="round" stroke-linejoin="round" />
<rect x="1762" y="852.8" width="17" height="16.4" rx="3" fill="none" stroke="#ccc" stroke-width="1.5" />
<path d="M1762,857.3 h17" fill="none" stroke="#ccc" stroke-width="1.3" stroke-linecap="round" stroke-linejoin="round" />
<path d="M8,1010.6 l5.6,4.6 l-5.6,4.6 M20.2,1004.4 l-5.6,4.6 l5.6,4.6" fill="none" stroke="#ccc" stroke-width="1.5" stroke-linecap="round" stroke-linejoin="round" />
<circle cx="54" cy="1011.9" r="8.2" fill="none" stroke="#ccc" stroke-width="1.5" />
<path d="M50.7,1008.6 l6.6,6.6 M57.3,1008.6 l-6.6,6.6" fill="none" stroke="#ccc" stroke-width="1.5" stroke-linecap="round" stroke-linejoin="round" />
<path d="M90.1,1004.2 L98.2,1019.2 a0.8,0.8 0 0 1 -0.7,1.2 H82.8 a0.8,0.8 0 0 1 -0.7,-1.2 Z" fill="none" stroke="#ccc" stroke-width="1.5" stroke-linecap="round" stroke-linejoin="round" />
<path d="M90.1,1009.5 v4.8" fill="none" stroke="#ccc" stroke-width="1.6" stroke-linecap="round" stroke-linejoin="round" />
<circle cx="90.1" cy="1017.2" r="1" fill="#ccc"  />
<circle cx="127" cy="1011.9" r="8.2" fill="none" stroke="#ccc" stroke-width="1.5" />
<path d="M127,1011.3 v4.6" fill="none" stroke="#ccc" stroke-width="1.6" stroke-linecap="round" stroke-linejoin="round" />
<circle cx="127" cy="1008.2" r="1.05" fill="#ccc"  />
<rect x="1629.3" y="1004" width="6.6" height="7" rx="3.1" fill="none" stroke="#d0d0d0" stroke-width="1.9" />
<rect x="1637.7" y="1004" width="6.6" height="7" rx="3.1" fill="none" stroke="#d0d0d0" stroke-width="1.9" />
<path d="M1636.4,1009.8 c5.6,0 10.6,2.4 10.6,5.8 c0,3.2 -4.8,5.8 -10.6,5.8 c-5.8,0 -10.6,-2.6 -10.6,-5.8 c0,-3.4 5,-5.8 10.6,-5.8z M1630.6,1012.2 v4.8 q2.4,1.8 5.8,1.8 q3.4,0 5.8,-1.8 v-4.8z" fill="#d0d0d0" fill-rule="evenodd"/>
<rect x="1633.5" y="1013.3" width="1.6" height="3.4" rx="0.5" fill="#d0d0d0"  />
<rect x="1637.7" y="1013.3" width="1.6" height="3.4" rx="0.5" fill="#d0d0d0"  />
<rect x="1752.8" y="1003.8" width="16.6" height="15.6" rx="3" fill="none" stroke="#ccc" stroke-width="1.5" />
<path d="M1756,1008 l3.5,3.3 l-3.5,3.3 M1761.2,1015.6 h4.8" fill="none" stroke="#ccc" stroke-width="1.4" stroke-linecap="round" stroke-linejoin="round" />
<circle cx="1801" cy="1011.5" r="1.5" fill="#ccc"  />
<path d="M1797.3,1007.8 a5.2,5.2 0 0 0 0,7.4 M1804.7,1007.8 a5.2,5.2 0 0 1 0,7.4 M1794.6,1005.2 a8.9,8.9 0 0 0 0,12.6 M1807.4,1005.2 a8.9,8.9 0 0 1 0,12.6" fill="none" stroke="#ccc" stroke-width="1.4" stroke-linecap="round" stroke-linejoin="round" />
<path d="M1888,1016.8 v-5.6 a6,6 0 0 1 12,0 v5.6 l1.4,1.8 h-14.8z M1892.2,1019.8 a1.9,1.9 0 0 0 3.6,0" fill="none" stroke="#ccc" stroke-width="1.4" stroke-linecap="round" stroke-linejoin="round" />
<g shape-rendering="auto"><rect x="1785" y="132.8" width="112" height="2" fill="#33679e"/><path d="M1790,133.8h50" stroke="#4b7fb5" stroke-width="1.3"/><rect x="1827.8" y="132.8" width="10.2" height="2" fill="#55aaff"/><rect x="1785" y="320.8" width="112" height="2" fill="#33679e"/><rect x="1799.9" y="320.8" width="8.3" height="2" fill="#55aaff"/><rect x="1785" y="366.8" width="112" height="2" fill="#33679e"/><rect x="1809" y="366.8" width="5" height="2" fill="#55aaff"/><rect x="1815" y="366.8" width="7" height="2" fill="#55aaff"/><rect x="1823" y="366.8" width="5" height="2" fill="#55aaff"/><rect x="1829" y="366.8" width="9" height="2" fill="#55aaff"/><rect x="1839" y="366.8" width="8" height="2" fill="#55aaff"/><rect x="1848" y="366.8" width="5" height="2" fill="#55aaff"/><rect x="1854" y="366.8" width="4" height="2" fill="#55aaff"/><rect x="1859" y="366.8" width="5" height="2" fill="#55aaff"/><rect x="1865" y="366.8" width="10" height="2" fill="#55aaff"/><rect x="1876" y="366.8" width="5" height="2" fill="#55aaff"/><rect x="1882" y="366.8" width="8" height="2" fill="#55aaff"/><rect x="1891" y="366.8" width="6" height="2" fill="#55aaff"/><path d="M1795.3,111.8h4.4M1800.9,111.8h2.5M1804.6,111.8h4.4M1810.2,111.8h6.3M1797.1,113.8h1.6M1799.9,113.8h2.5M1803.7,113.8h6.3M1811.1,113.8h2.5M1814.9,113.8h4.4M1820.5,113.8h7.2M1828.9,113.8h1.6M1831.7,113.8h6.3M1839.1,113.8h3.5M1843.8,113.8h1.6M1846.6,113.8h2.5M1850.3,113.8h2.5M1799.0,115.8h4.4M1804.6,115.8h2.5M1808.3,115.8h3.5M1813.0,115.8h2.5M1816.7,115.8h5.3M1799.0,117.8h4.4M1804.6,117.8h1.6M1807.4,117.8h6.3M1797.1,119.8h2.5M1800.9,119.8h1.6M1795.3,121.8h8.1M1804.6,121.8h8.1M1813.9,121.8h7.2M1822.3,121.8h1.6M1825.1,121.8h0.7M1793.4,125.8h5.3M1791.5,129.8h4.4M1788.7,137.8h1.6M1791.5,137.8h3.5M1796.2,137.8h1.6M1799.0,137.8h6.3M1806.5,137.8h1.6M1800.9,189.8h3.5M1805.5,189.8h2.5M1809.3,189.8h2.5M1813.0,189.8h6.3M1800.9,205.8h3.5M1805.5,205.8h2.5M1809.3,205.8h2.5M1813.0,205.8h6.3M1800.9,221.8h3.5M1805.5,221.8h2.5M1809.3,221.8h2.5M1813.0,221.8h6.3M1800.9,237.8h3.5M1805.5,237.8h2.5M1809.3,237.8h2.5M1813.0,237.8h6.3M1800.9,253.8h3.5M1805.5,253.8h2.5M1809.3,253.8h2.5M1813.0,253.8h6.3M1800.9,269.8h3.5M1805.5,269.8h2.5M1809.3,269.8h2.5M1813.0,269.8h6.3M1794.3,287.8h3.5M1799.0,287.8h3.5M1803.7,287.8h6.3M1811.1,287.8h2.5M1788.7,297.8h3.5M1793.4,297.8h4.4M1799.0,297.8h4.4M1804.6,297.8h5.3M1811.1,297.8h2.5M1814.9,297.8h2.5M1818.6,297.8h5.3M1825.1,297.8h3.5M1788.7,299.8h6.3M1796.2,299.8h3.5M1800.9,299.8h2.5M1804.6,299.8h4.4M1810.2,299.8h6.3M1817.7,299.8h3.5M1822.3,299.8h9.1M1832.6,299.8h4.4M1838.2,299.8h4.4M1843.8,299.8h8.1M1853.1,299.8h4.4M1790.6,303.8h3.5M1795.3,303.8h2.5M1799.0,303.8h2.5M1802.7,303.8h2.5M1806.5,303.8h2.5M1810.2,303.8h3.5M1814.9,303.8h8.1M1824.2,303.8h3.5M1828.9,303.8h1.6M1831.7,303.8h5.3M1838.2,303.8h7.2M1846.6,303.8h2.5M1850.3,303.8h3.5M1855.0,303.8h3.5M1859.6,303.8h1.6M1862.4,303.8h2.5M1790.6,307.8h4.4M1796.2,307.8h6.3M1803.7,307.8h4.4M1809.3,307.8h7.2M1817.7,307.8h7.2M1826.1,307.8h4.4M1831.7,307.8h2.5M1835.4,307.8h9.1M1845.6,307.8h2.5M1792.5,311.8h7.2M1800.9,311.8h8.1M1810.2,311.8h8.1M1819.5,311.8h2.5M1794.3,313.8h1.6M1797.1,313.8h5.3M1803.7,313.8h10.9M1815.8,313.8h8.1M1825.1,313.8h10.9M1837.2,313.8h6.3M1796.2,315.8h0.7M1798.1,317.8h4.4M1803.7,317.8h4.4M1798.1,319.8h4.4M1803.7,319.8h2.5M1807.4,319.8h1.6M1799.9,323.8h8.1M1809.3,323.8h2.5M1798.1,325.8h0.7M1798.1,327.8h3.5M1802.7,327.8h2.5M1806.5,327.8h3.5M1811.1,327.8h5.3M1817.7,327.8h2.5M1798.1,329.8h2.5M1801.8,329.8h3.5M1799.9,331.8h7.2M1808.3,331.8h1.6M1811.1,331.8h2.5M1814.9,331.8h1.6M1817.7,331.8h6.3M1799.9,333.8h2.5M1803.7,333.8h6.3M1811.1,333.8h2.5M1814.9,333.8h0.7M1799.9,335.8h7.2M1808.3,335.8h1.6M1811.1,335.8h2.5M1814.9,335.8h0.7M1798.1,337.8h0.7M1796.2,339.8h0.7M1794.3,341.8h2.5M1798.1,341.8h4.4M1794.3,343.8h3.5M1799.0,343.8h4.4M1804.6,343.8h7.2M1813.0,343.8h4.4M1818.6,343.8h0.7M1796.2,347.8h2.5M1799.9,347.8h2.5M1803.7,347.8h5.3M1810.2,347.8h5.3M1816.7,347.8h3.5M1798.1,349.8h5.3M1804.6,349.8h3.5M1809.3,349.8h2.5M1813.0,349.8h2.5M1816.7,349.8h2.5M1820.5,349.8h5.3M1799.9,351.8h4.4M1805.5,351.8h9.1M1815.8,351.8h3.5M1820.5,351.8h5.3M1827.0,351.8h9.1M1837.2,351.8h2.5M1841.0,351.8h6.3M1848.4,351.8h1.6M1851.2,351.8h3.5M1855.9,351.8h6.3M1863.4,351.8h4.4M1869.0,351.8h2.5M1872.7,351.8h9.1M1883.0,351.8h2.5M1799.9,353.8h1.6M1802.7,353.8h10.9M1814.9,353.8h3.5M1799.9,355.8h3.5M1804.6,355.8h8.1M1813.9,355.8h2.5M1817.7,355.8h2.5M1799.9,357.8h3.5M1804.6,357.8h6.3M1812.1,357.8h4.4M1801.8,359.8h2.5M1805.5,359.8h4.4M1811.1,359.8h10.9M1823.3,359.8h3.5M1827.9,359.8h6.3M1835.4,359.8h6.3M1842.8,359.8h10.9M1855.0,359.8h6.3M1862.4,359.8h4.4M1868.0,359.8h8.1M1877.4,359.8h3.5M1882.0,359.8h7.2M1890.4,359.8h4.4M1799.9,361.8h4.4M1799.9,363.8h1.6M1801.8,365.8h3.5M1806.5,365.8h10.9M1818.6,365.8h3.5M1823.3,365.8h4.4M1828.9,365.8h9.1M1839.1,365.8h1.6M1801.8,369.8h3.5M1806.5,369.8h3.5M1811.1,369.8h6.3M1818.6,369.8h5.3M1825.1,369.8h4.4M1830.7,369.8h9.1M1841.0,369.8h0.7M1799.9,371.8h1.6M1798.1,373.8h4.4M1796.2,375.8h3.5M1800.9,375.8h5.3M1807.4,375.8h3.5M1812.1,375.8h3.5M1816.7,375.8h9.1M1827.0,375.8h1.6M1796.2,379.8h4.4M1801.8,379.8h5.3M1808.3,379.8h10.9M1798.1,381.8h9.1M1808.3,381.8h4.4M1813.9,381.8h4.4M1819.5,381.8h2.5M1823.3,381.8h2.5M1799.9,383.8h2.5M1803.7,383.8h3.5M1808.3,383.8h5.3M1814.9,383.8h3.5M1819.5,383.8h4.4M1825.1,383.8h3.5M1829.8,383.8h5.3M1836.3,383.8h7.2M1844.7,383.8h7.2M1853.1,383.8h1.6M1855.9,383.8h5.3M1862.4,383.8h8.1M1871.8,383.8h4.4M1877.4,383.8h8.1M1799.9,385.8h8.1M1809.3,385.8h2.5M1813.0,385.8h5.3M1799.9,387.8h2.5M1803.7,387.8h4.4M1809.3,387.8h9.1M1799.9,389.8h9.1M1810.2,389.8h7.2M1801.8,391.8h3.5M1806.5,391.8h5.3M1813.0,391.8h2.5M1816.7,391.8h4.4M1822.3,391.8h10.9M1834.4,391.8h8.1M1843.8,391.8h4.4M1849.4,391.8h2.5M1853.1,391.8h10.9M1865.2,391.8h9.1M1875.5,391.8h4.4M1881.1,391.8h5.3M1887.6,391.8h4.4M1893.2,391.8h1.6M1799.9,393.8h2.5M1803.7,393.8h0.7M1799.9,395.8h1.6M1801.8,397.8h2.5M1805.5,397.8h2.5M1809.3,397.8h1.6M1812.1,397.8h2.5M1815.8,397.8h7.2M1824.2,397.8h5.3M1830.7,397.8h10.0M1801.8,399.8h8.1M1811.1,399.8h2.5M1814.9,399.8h7.2M1823.3,399.8h7.2M1831.7,399.8h5.3M1838.2,399.8h8.1M1847.5,399.8h4.4M1853.1,399.8h2.5M1856.8,399.8h6.3M1864.3,399.8h6.3M1871.8,399.8h2.5M1875.5,399.8h1.6M1878.3,399.8h1.6M1881.1,399.8h10.9M1893.2,399.8h1.6M1801.8,401.8h8.1M1811.1,401.8h2.5M1814.9,401.8h6.3M1822.3,401.8h9.1M1832.6,401.8h2.5M1836.3,401.8h4.4M1799.9,403.8h2.5M1798.1,405.8h3.5M1796.2,407.8h1.6M1799.0,407.8h3.5M1803.7,407.8h3.5M1808.3,407.8h3.5M1813.0,407.8h6.3M1820.5,407.8h3.5M1825.1,407.8h3.5M1796.2,411.8h7.2M1804.6,411.8h4.4M1810.2,411.8h3.5M1814.9,411.8h5.3M1798.1,413.8h4.4M1803.7,413.8h2.5M1807.4,413.8h1.6M1810.2,413.8h9.1M1820.5,413.8h4.4M1799.9,415.8h5.3M1806.5,415.8h8.1M1815.8,415.8h7.2M1824.2,415.8h6.3M1831.7,415.8h4.4M1837.2,415.8h6.3M1844.7,415.8h2.5M1848.4,415.8h6.3M1855.9,415.8h2.5M1859.6,415.8h6.3M1867.1,415.8h6.3M1874.6,415.8h1.6M1877.4,415.8h5.3M1883.9,415.8h1.6M1799.9,417.8h2.5M1803.7,417.8h7.2M1812.1,417.8h1.6M1814.9,417.8h3.5M1799.9,419.8h10.9M1812.1,419.8h2.5M1815.8,419.8h0.7M1799.9,421.8h2.5M1803.7,421.8h5.3M1810.2,421.8h7.2M1801.8,423.8h9.1M1812.1,423.8h2.5M1815.8,423.8h6.3M1823.3,423.8h1.6M1826.1,423.8h4.4M1831.7,423.8h8.1M1841.0,423.8h6.3M1848.4,423.8h6.3M1855.9,423.8h6.3M1863.4,423.8h5.3M1869.9,423.8h10.9M1882.0,423.8h10.9M1894.2,423.8h0.7M1799.9,425.8h4.4M1799.9,427.8h1.6M1801.8,429.8h3.5M1806.5,429.8h3.5M1811.1,429.8h3.5M1815.8,429.8h1.6M1818.6,429.8h10.9M1830.7,429.8h2.5M1834.4,429.8h6.3M1801.8,431.8h5.3M1808.3,431.8h6.3M1815.8,431.8h1.6M1818.6,431.8h10.9M1830.7,431.8h2.5M1834.4,431.8h5.3M1841.0,431.8h4.4M1846.6,431.8h7.2M1855.0,431.8h6.3M1862.4,431.8h7.2M1870.8,431.8h6.3M1878.3,431.8h3.5M1883.0,431.8h9.1M1893.2,431.8h1.6M1801.8,433.8h5.3M1808.3,433.8h6.3M1815.8,433.8h6.3M1823.3,433.8h10.9M1835.4,433.8h5.3M1799.9,435.8h2.5M1798.1,437.8h3.5M1796.2,439.8h9.1M1806.5,439.8h6.3M1813.9,439.8h3.5M1818.6,439.8h6.3M1826.1,439.8h2.5M1796.2,443.8h5.3M1802.7,443.8h2.5M1806.5,443.8h4.4M1812.1,443.8h2.5M1815.8,443.8h4.4M1798.1,445.8h5.3M1804.6,445.8h4.4M1810.2,445.8h2.5M1813.9,445.8h8.1M1823.3,445.8h2.5M1799.9,447.8h4.4M1805.5,447.8h2.5M1809.3,447.8h3.5M1813.9,447.8h8.1M1823.3,447.8h3.5M1827.9,447.8h10.9M1840.0,447.8h2.5M1843.8,447.8h10.9M1855.9,447.8h2.5M1859.6,447.8h9.1M1869.9,447.8h8.1M1879.2,447.8h6.3M1799.9,449.8h4.4M1805.5,449.8h2.5M1809.3,449.8h3.5M1813.9,449.8h2.5M1817.7,449.8h0.7M1799.9,451.8h3.5M1804.6,451.8h9.1M1814.9,451.8h2.5M1818.6,451.8h1.6M1799.9,453.8h5.3M1806.5,453.8h2.5M1810.2,453.8h7.2M1801.8,455.8h3.5M1806.5,455.8h2.5M1810.2,455.8h9.1M1820.5,455.8h4.4M1826.1,455.8h6.3M1833.5,455.8h4.4M1839.1,455.8h4.4M1844.7,455.8h4.4M1850.3,455.8h3.5M1855.0,455.8h4.4M1860.6,455.8h4.4M1866.2,455.8h2.5M1869.9,455.8h9.1M1880.2,455.8h4.4M1885.8,455.8h1.6M1888.6,455.8h4.4M1894.2,455.8h0.7M1799.9,457.8h4.4M1799.9,459.8h1.6M1801.8,461.8h9.1M1812.1,461.8h1.6M1814.9,461.8h4.4M1820.5,461.8h4.4M1826.1,461.8h6.3M1833.5,461.8h7.2M1801.8,463.8h3.5M1806.5,463.8h6.3M1813.9,463.8h2.5M1817.7,463.8h2.5M1821.4,463.8h10.9M1833.5,463.8h3.5M1838.2,463.8h2.5M1841.9,463.8h2.5M1845.6,463.8h3.5M1850.3,463.8h3.5M1855.0,463.8h1.6M1857.8,463.8h10.9M1869.9,463.8h2.5M1873.6,463.8h3.5M1878.3,463.8h10.9M1890.4,463.8h2.5M1894.2,463.8h0.7M1801.8,465.8h8.1M1811.1,465.8h3.5M1815.8,465.8h4.4M1821.4,465.8h2.5M1825.1,465.8h6.3M1832.6,465.8h6.3M1840.0,465.8h1.6M1799.9,467.8h2.5M1798.1,469.8h4.4M1796.2,471.8h4.4M1801.8,471.8h2.5M1805.5,471.8h3.5M1810.2,471.8h1.6M1813.0,471.8h10.9M1825.1,471.8h3.5M1796.2,475.8h2.5M1799.9,475.8h4.4M1805.5,475.8h2.5M1809.3,475.8h3.5M1813.9,475.8h1.6M1816.7,475.8h3.5M1798.1,477.8h2.5M1801.8,477.8h10.9M1813.9,477.8h3.5M1818.6,477.8h2.5M1822.3,477.8h3.5M1799.9,479.8h3.5M1804.6,479.8h2.5M1808.3,479.8h3.5M1813.0,479.8h2.5M1816.7,479.8h5.3M1823.3,479.8h1.6M1826.1,479.8h4.4M1831.7,479.8h6.3M1839.1,479.8h4.4M1844.7,479.8h3.5M1849.4,479.8h7.2M1857.8,479.8h2.5M1861.5,479.8h1.6M1864.3,479.8h6.3M1871.8,479.8h9.1M1882.0,479.8h3.5M1799.9,481.8h2.5M1803.7,481.8h2.5M1807.4,481.8h3.5M1812.1,481.8h1.6M1814.9,481.8h2.5M1799.9,483.8h3.5M1804.6,483.8h3.5M1809.3,483.8h8.1M1799.9,485.8h3.5M1804.6,485.8h6.3M1812.1,485.8h5.3M1801.8,487.8h3.5M1806.5,487.8h3.5M1811.1,487.8h5.3M1817.7,487.8h6.3M1825.1,487.8h8.1M1834.4,487.8h2.5M1838.2,487.8h3.5M1842.8,487.8h4.4M1848.4,487.8h10.9M1860.6,487.8h1.6M1863.4,487.8h3.5M1868.0,487.8h1.6M1870.8,487.8h1.6M1873.6,487.8h1.6M1876.4,487.8h9.1M1886.7,487.8h6.3M1894.2,487.8h0.7M1799.9,489.8h3.5M1799.9,491.8h1.6M1801.8,493.8h5.3M1808.3,493.8h3.5M1813.0,493.8h5.3M1819.5,493.8h2.5M1823.3,493.8h8.1M1832.6,493.8h8.1M1801.8,495.8h4.4M1807.4,495.8h8.1M1816.7,495.8h5.3M1823.3,495.8h6.3M1830.7,495.8h4.4M1836.3,495.8h6.3M1843.8,495.8h3.5M1848.4,495.8h9.1M1858.7,495.8h3.5M1863.4,495.8h3.5M1868.0,495.8h4.4M1873.6,495.8h3.5M1878.3,495.8h9.1M1888.6,495.8h6.3M1801.8,497.8h8.1M1811.1,497.8h2.5M1814.9,497.8h4.4M1820.5,497.8h4.4M1826.1,497.8h1.6M1828.9,497.8h2.5M1832.6,497.8h1.6M1835.4,497.8h2.5M1839.1,497.8h2.5M1799.9,499.8h2.5M1798.1,501.8h3.5M1796.2,503.8h4.4M1801.8,503.8h2.5M1805.5,503.8h1.6M1808.3,503.8h2.5M1812.1,503.8h8.1M1821.4,503.8h4.4M1827.0,503.8h1.6M1794.3,507.8h5.3M1794.3,509.8h3.5M1799.0,509.8h7.2M1807.4,509.8h3.5M1812.1,509.8h9.1M1822.3,509.8h3.5M1827.0,509.8h0.7M1792.5,511.8h5.3M1790.6,515.8h2.5M1794.3,515.8h1.6M1788.7,519.8h3.5M1793.4,519.8h5.3M1799.9,519.8h1.6M1802.7,519.8h3.5M1807.4,519.8h4.4M1813.0,519.8h4.4M1818.6,519.8h6.3M1826.1,519.8h4.4M1831.7,519.8h3.5M1836.3,519.8h1.6M1839.1,519.8h2.5M1788.7,523.8h3.5M1793.4,523.8h4.4M1799.0,523.8h2.5M1802.7,523.8h1.6M1805.5,523.8h4.4M1790.6,529.8h4.4M1796.2,529.8h2.5M1799.9,529.8h5.3M1806.5,529.8h3.5M1796.2,537.8h3.5M1800.9,537.8h2.5M1804.6,537.8h6.3M1812.1,537.8h4.4M1817.7,537.8h2.5M1796.2,551.8h6.3M1803.7,551.8h8.1M1813.0,551.8h3.5M1817.7,551.8h3.5M1822.3,551.8h6.3M1798.1,553.8h10.9M1810.2,553.8h1.6M1813.0,553.8h2.5M1816.7,553.8h3.5M1821.4,553.8h2.5M1825.1,553.8h2.5M1828.9,553.8h4.4M1834.4,553.8h7.2M1842.8,553.8h0.7M1799.9,555.8h4.4M1805.5,555.8h1.6M1808.3,555.8h3.5M1813.0,555.8h3.5M1817.7,555.8h8.1M1827.0,555.8h3.5M1831.7,555.8h2.5M1835.4,555.8h4.4M1799.9,557.8h3.5M1801.8,559.8h10.9M1813.9,559.8h2.5M1801.8,561.8h8.1M1811.1,561.8h9.1M1821.4,561.8h10.9M1833.5,561.8h7.2M1841.9,561.8h0.7M1799.9,563.8h4.4M1798.1,565.8h4.4M1796.2,567.8h9.1M1806.5,567.8h5.3M1813.0,567.8h2.5M1816.7,567.8h3.5M1821.4,567.8h9.1M1831.7,567.8h6.3M1801.8,587.8h3.5M1806.5,587.8h2.5M1810.2,587.8h3.5M1814.9,587.8h3.5M1819.5,587.8h2.5M1801.8,607.8h3.5M1806.5,607.8h2.5M1810.2,607.8h3.5M1814.9,607.8h3.5M1819.5,607.8h2.5M1792.5,617.8h8.1M1801.8,617.8h2.5M1805.5,617.8h1.6M1808.3,617.8h9.1M1818.6,617.8h6.3M1826.1,617.8h8.1M1835.4,617.8h4.4M1841.0,617.8h9.1M1851.2,617.8h9.1M1861.5,617.8h10.9M1873.6,617.8h6.3M1881.1,617.8h2.5M1884.8,617.8h6.3M1892.3,617.8h4.4M1794.3,619.8h6.3M1801.8,619.8h7.2M1810.2,619.8h4.4M1796.2,623.8h1.6M1799.0,623.8h8.1M1808.3,623.8h7.2M1816.7,623.8h0.7M1798.1,625.8h9.1M1808.3,625.8h8.1M1817.7,625.8h9.1M1827.9,625.8h8.1M1837.2,625.8h3.5M1841.9,625.8h2.5M1845.6,625.8h1.6M1848.4,625.8h1.6M1851.2,625.8h2.5M1855.0,625.8h8.1M1864.3,625.8h4.4M1869.9,625.8h2.5M1873.6,625.8h4.4M1879.2,625.8h0.7M1796.2,627.8h5.3M1796.2,631.8h1.6M1799.0,631.8h8.1M1808.3,631.8h1.6M1811.1,631.8h6.3M1798.1,633.8h6.3M1805.5,633.8h8.1M1814.9,633.8h3.5M1819.5,633.8h5.3M1826.1,633.8h3.5M1830.7,633.8h1.6M1833.5,633.8h5.3M1840.0,633.8h10.9M1852.2,633.8h2.5M1855.9,633.8h9.1M1866.2,633.8h6.3M1873.6,633.8h6.3M1881.1,633.8h1.6M1796.2,635.8h5.3M1796.2,639.8h6.3M1803.7,639.8h2.5M1807.4,639.8h9.1M1798.1,641.8h9.1M1808.3,641.8h5.3M1814.9,641.8h3.5M1819.5,641.8h10.9M1831.7,641.8h2.5M1835.4,641.8h3.5M1840.0,641.8h3.5M1844.7,641.8h9.1M1855.0,641.8h10.9M1867.1,641.8h3.5M1871.8,641.8h3.5M1876.4,641.8h4.4M1796.2,643.8h5.3M1796.2,647.8h5.3M1802.7,647.8h5.3M1809.3,647.8h4.4M1814.9,647.8h2.5M1798.1,649.8h5.3M1804.6,649.8h8.1M1813.9,649.8h3.5M1818.6,649.8h10.9M1830.7,649.8h1.6M1833.5,649.8h7.2M1841.9,649.8h8.1M1851.2,649.8h8.1M1860.6,649.8h3.5M1865.2,649.8h2.5M1869.0,649.8h7.2M1877.4,649.8h2.5M1881.1,649.8h4.4M1886.7,649.8h3.5M1891.4,649.8h4.4M1796.2,651.8h5.3M1796.2,655.8h9.1M1806.5,655.8h3.5M1811.1,655.8h7.2M1819.5,655.8h7.2M1827.9,655.8h2.5M1798.1,657.8h1.6M1800.9,657.8h5.3M1807.4,657.8h1.6M1810.2,657.8h5.3M1816.7,657.8h3.5M1821.4,657.8h8.1M1830.7,657.8h0.7M1798.1,659.8h9.1M1808.3,659.8h3.5M1813.0,659.8h8.1M1822.3,659.8h5.3M1828.9,659.8h1.6M1798.1,661.8h9.1M1808.3,661.8h6.3M1815.8,661.8h3.5M1820.5,661.8h5.3M1827.0,661.8h5.3M1833.5,661.8h5.3M1840.0,661.8h10.9M1852.2,661.8h2.5M1855.9,661.8h6.3M1863.4,661.8h3.5M1798.1,665.8h3.5M1802.7,665.8h2.5M1806.5,665.8h5.3M1813.0,665.8h1.6M1815.8,665.8h3.5M1820.5,665.8h5.3M1827.0,665.8h2.5M1830.7,665.8h6.3M1838.2,665.8h2.5M1796.2,667.8h3.5M1800.9,667.8h0.7M1794.3,671.8h3.5M1799.0,671.8h0.7M1792.5,673.8h2.5M1796.2,673.8h7.2M1804.6,673.8h2.5M1808.3,673.8h2.5M1812.1,673.8h9.1M1822.3,673.8h6.3M1829.8,673.8h3.5M1834.4,673.8h4.4M1840.0,673.8h0.7" stroke="#5c8c48" stroke-width="1.5" opacity=".52" fill="none"/><path d="M1785.9,139.8h6.3M1787.8,143.8h2.5M1789.7,147.8h2.5M1792.5,151.8h2.5M1794.3,153.8h2.5M1796.2,155.8h1.6M1799.9,155.8h3.5M1822.3,155.8h3.5M1827.9,155.8h5.3M1844.7,155.8h5.3M1853.1,155.8h1.6M1796.2,157.8h0.7M1797.1,161.8h0.7M1795.3,163.8h2.5M1793.4,165.8h2.5M1792.5,169.8h2.5M1794.3,173.8h2.5M1796.2,177.8h2.5M1798.1,179.8h1.6M1801.8,179.8h3.5M1821.4,179.8h3.5M1827.9,179.8h3.5M1870.8,179.8h3.5M1877.4,179.8h1.6M1798.1,181.8h2.5M1799.0,183.8h2.5M1799.0,185.8h2.5M1798.1,187.8h0.7M1838.2,187.8h0.7M1797.1,189.8h2.5M1796.2,193.8h2.5M1798.1,195.8h1.6M1801.8,195.8h3.5M1821.4,195.8h3.5M1827.9,195.8h3.5M1872.7,195.8h3.5M1879.2,195.8h1.6M1798.1,197.8h2.5M1799.0,199.8h2.5M1799.0,201.8h2.5M1798.1,203.8h0.7M1838.2,203.8h0.7M1797.1,205.8h2.5M1796.2,209.8h2.5M1798.1,211.8h1.6M1801.8,211.8h3.5M1821.4,211.8h3.5M1827.9,211.8h3.5M1869.0,211.8h3.5M1875.5,211.8h1.6M1798.1,213.8h2.5M1799.0,215.8h2.5M1799.0,217.8h2.5M1798.1,219.8h0.7M1838.2,219.8h0.7M1797.1,221.8h2.5M1796.2,225.8h2.5M1798.1,227.8h1.6M1801.8,227.8h3.5M1821.4,227.8h3.5M1827.9,227.8h3.5M1883.0,227.8h3.5M1889.5,227.8h1.6M1798.1,229.8h2.5M1799.0,231.8h2.5M1799.0,233.8h2.5M1798.1,235.8h0.7M1838.2,235.8h0.7M1797.1,237.8h2.5M1796.2,241.8h2.5M1798.1,243.8h1.6M1801.8,243.8h3.5M1821.4,243.8h3.5M1827.9,243.8h3.5M1878.3,243.8h3.5M1884.8,243.8h1.6M1798.1,245.8h2.5M1799.0,247.8h2.5M1799.0,249.8h2.5M1798.1,251.8h0.7M1838.2,251.8h0.7M1797.1,253.8h2.5M1796.2,257.8h2.5M1798.1,259.8h1.6M1801.8,259.8h3.5M1821.4,259.8h3.5M1827.9,259.8h3.5M1868.0,259.8h3.5M1874.6,259.8h1.6M1798.1,261.8h2.5M1799.0,263.8h2.5M1799.0,265.8h2.5M1798.1,267.8h0.7M1838.2,267.8h0.7M1797.1,269.8h2.5M1795.3,273.8h2.5M1793.4,277.8h2.5M1791.5,279.8h2.5M1788.7,283.8h2.5M1786.9,287.8h6.3M1789.7,525.8h6.3M1791.5,531.8h2.5M1793.4,533.8h1.6M1804.6,533.8h1.6M1795.3,535.8h0.7M1850.3,535.8h0.7M1792.5,537.8h2.5M1791.5,541.8h2.5M1793.4,545.8h2.5M1795.3,547.8h2.5M1797.1,571.8h2.5M1799.0,573.8h2.5M1800.9,575.8h0.7M1840.0,575.8h0.7M1800.9,577.8h2.5M1802.7,579.8h1.6M1813.9,579.8h1.6M1802.7,581.8h0.7M1821.4,581.8h0.7M1801.8,583.8h2.5M1799.9,585.8h2.5M1798.1,587.8h2.5M1797.1,591.8h2.5M1799.0,593.8h2.5M1800.9,595.8h0.7M1839.1,595.8h0.7M1800.9,597.8h2.5M1802.7,599.8h1.6M1814.9,599.8h1.6M1802.7,601.8h0.7M1831.7,601.8h0.7M1801.8,603.8h2.5M1799.9,605.8h2.5M1798.1,607.8h2.5M1796.2,611.8h2.5M1794.3,613.8h2.5M1785.9,677.8h3.5M1787.8,693.8h2.5M1789.7,697.8h2.5M1791.5,699.8h4.4M1790.6,703.8h2.5M1789.7,707.8h2.5M1791.5,709.8h4.4M1790.6,713.8h2.5M1789.7,717.8h2.5M1791.5,719.8h4.4M1790.6,723.8h2.5M1789.7,727.8h2.5M1791.5,729.8h7.2M1830.7,731.8h7.2M1790.6,733.8h2.5M1789.7,737.8h2.5M1795.3,745.8h2.5M1832.6,745.8h2.5M1791.5,753.8h5.3M1824.2,753.8h5.3M1790.6,757.8h2.5M1788.7,759.8h2.5M1786.9,761.8h3.5" stroke="#4a86b8" stroke-width="1.5" opacity=".52" fill="none"/><path d="M1793.4,139.8h1.6M1801.8,139.8h4.4M1791.5,143.8h4.4M1793.4,147.8h4.4M1796.2,151.8h4.4M1813.0,151.8h7.2M1830.7,151.8h12.8M1798.1,153.8h4.4M1796.2,169.8h4.4M1813.0,169.8h7.2M1830.7,169.8h12.8M1798.1,173.8h4.4M1799.9,177.8h4.4M1806.5,179.8h4.4M1801.8,181.8h4.4M1799.9,187.8h4.4M1799.9,193.8h4.4M1806.5,195.8h4.4M1801.8,197.8h4.4M1799.9,203.8h4.4M1799.9,209.8h4.4M1806.5,211.8h4.4M1801.8,213.8h4.4M1799.9,219.8h4.4M1799.9,225.8h4.4M1806.5,227.8h4.4M1801.8,229.8h4.4M1799.9,235.8h4.4M1799.9,241.8h4.4M1806.5,243.8h4.4M1801.8,245.8h4.4M1799.9,251.8h4.4M1799.9,257.8h4.4M1806.5,259.8h4.4M1801.8,261.8h4.4M1799.9,267.8h4.4M1797.1,525.8h1.6M1809.3,525.8h4.4M1795.3,531.8h4.4M1825.1,531.8h7.2M1795.3,541.8h4.4M1812.1,541.8h7.2M1829.8,541.8h12.8M1797.1,545.8h4.4M1813.0,545.8h7.2M1830.7,545.8h12.8M1799.0,547.8h4.4M1800.9,571.8h4.4M1802.7,573.8h4.4M1802.7,575.8h4.4M1800.9,591.8h4.4M1802.7,593.8h4.4M1802.7,595.8h4.4M1790.6,677.8h5.3M1790.6,679.8h5.3M1790.6,681.8h4.4M1790.6,683.8h7.2M1790.6,685.8h12.8M1791.5,693.8h4.4M1793.4,697.8h4.4M1797.1,699.8h3.5M1808.3,699.8h3.5M1819.5,699.8h4.4M1797.1,701.8h10.0M1819.5,701.8h7.2M1793.4,707.8h4.4M1797.1,709.8h3.5M1809.3,709.8h3.5M1821.4,709.8h4.4M1797.1,711.8h10.0M1820.5,711.8h7.2M1793.4,717.8h4.4M1797.1,719.8h3.5M1808.3,719.8h3.5M1822.3,719.8h4.4M1797.1,721.8h10.0M1793.4,727.8h4.4M1799.9,729.8h4.4M1819.5,729.8h3.5M1833.5,729.8h3.5M1799.9,731.8h10.0M1820.5,731.8h7.2M1793.4,737.8h4.4M1799.0,745.8h4.4M1798.1,753.8h3.5" stroke="#82b8d4" stroke-width="1.5" opacity=".52" fill="none"/><path d="M1796.2,139.8h4.4M1807.4,139.8h3.5M1812.1,139.8h7.2M1797.1,143.8h10.0M1799.0,147.8h3.5M1803.7,147.8h4.4M1801.8,151.8h10.0M1821.4,151.8h8.1M1844.7,151.8h4.4M1803.7,153.8h7.2M1812.1,153.8h7.2M1801.8,169.8h10.0M1821.4,169.8h8.1M1844.7,169.8h4.4M1803.7,173.8h13.7M1805.5,177.8h8.1M1814.9,177.8h10.0M1812.1,179.8h4.4M1807.4,181.8h11.9M1805.5,187.8h10.0M1816.7,187.8h1.6M1819.5,187.8h15.6M1805.5,193.8h9.1M1812.1,195.8h4.4M1807.4,197.8h11.9M1805.5,203.8h10.0M1816.7,203.8h1.6M1819.5,203.8h15.6M1805.5,209.8h9.1M1812.1,211.8h4.4M1807.4,213.8h11.9M1805.5,219.8h10.0M1816.7,219.8h1.6M1819.5,219.8h15.6M1805.5,225.8h9.1M1812.1,227.8h4.4M1807.4,229.8h11.9M1805.5,235.8h10.0M1816.7,235.8h1.6M1819.5,235.8h15.6M1805.5,241.8h9.1M1812.1,243.8h4.4M1807.4,245.8h11.9M1805.5,251.8h10.0M1816.7,251.8h1.6M1819.5,251.8h15.6M1805.5,257.8h9.1M1812.1,259.8h4.4M1807.4,261.8h11.9M1805.5,267.8h10.0M1816.7,267.8h1.6M1819.5,267.8h15.6M1799.9,525.8h8.1M1814.9,525.8h7.2M1823.3,525.8h7.2M1800.9,531.8h9.1M1811.1,531.8h12.8M1833.5,531.8h8.1M1800.9,541.8h10.0M1820.5,541.8h8.1M1843.8,541.8h4.4M1802.7,545.8h3.5M1807.4,545.8h4.4M1821.4,545.8h8.1M1844.7,545.8h4.4M1804.6,547.8h9.1M1806.5,571.8h10.0M1808.3,573.8h9.1M1818.6,573.8h5.3M1825.1,573.8h17.5M1808.3,575.8h2.5M1812.1,575.8h10.9M1824.2,575.8h12.8M1806.5,591.8h10.0M1808.3,593.8h9.1M1818.6,593.8h5.3M1825.1,593.8h17.5M1808.3,595.8h2.5M1812.1,595.8h10.0M1823.3,595.8h12.8M1797.1,677.8h5.3M1797.1,679.8h1.6M1796.2,681.8h17.5M1799.0,683.8h8.1M1804.6,685.8h4.4M1797.1,693.8h3.5M1801.8,693.8h4.4M1799.0,697.8h9.1M1801.8,699.8h5.3M1813.0,699.8h5.3M1825.1,699.8h12.8M1808.3,701.8h4.4M1813.9,701.8h4.4M1799.0,707.8h9.1M1801.8,709.8h6.3M1813.9,709.8h6.3M1827.0,709.8h12.8M1808.3,711.8h4.4M1813.9,711.8h5.3M1799.0,717.8h10.0M1801.8,719.8h5.3M1813.0,719.8h8.1M1827.9,719.8h12.8M1808.3,721.8h8.1M1799.0,727.8h10.0M1805.5,729.8h12.8M1824.2,729.8h8.1M1838.2,729.8h2.5M1811.1,731.8h8.1M1799.0,737.8h9.1M1809.3,737.8h10.9M1804.6,745.8h12.8M1802.7,753.8h7.2" stroke="#b07f69" stroke-width="1.5" opacity=".52" fill="none"/><path d="M1795.3,139.8h0.7M1806.5,139.8h0.7M1796.2,143.8h0.7M1798.1,147.8h0.7M1800.9,151.8h0.7M1820.5,151.8h0.7M1843.8,151.8h0.7M1802.7,153.8h0.7M1804.6,155.8h9.1M1814.9,155.8h4.4M1834.4,155.8h8.1M1796.2,159.8h3.5M1800.9,159.8h4.4M1806.5,159.8h2.5M1810.2,159.8h6.3M1817.7,159.8h2.5M1821.4,159.8h7.2M1829.8,159.8h3.5M1834.4,159.8h6.3M1841.9,159.8h8.1M1851.2,159.8h2.5M1855.0,159.8h2.5M1858.7,159.8h7.2M1867.1,159.8h7.2M1875.5,159.8h8.1M1884.8,159.8h3.5M1889.5,159.8h4.4M1895.1,159.8h1.6M1800.9,169.8h0.7M1820.5,169.8h0.7M1843.8,169.8h0.7M1802.7,173.8h0.7M1804.6,177.8h0.7M1811.1,179.8h0.7M1817.7,179.8h1.6M1832.6,179.8h3.5M1837.2,179.8h10.9M1849.4,179.8h1.6M1852.2,179.8h2.5M1855.9,179.8h9.1M1866.2,179.8h2.5M1806.5,181.8h0.7M1801.8,183.8h9.1M1812.1,183.8h2.5M1815.8,183.8h7.2M1824.2,183.8h1.6M1827.0,183.8h7.2M1835.4,183.8h3.5M1840.0,183.8h5.3M1846.6,183.8h8.1M1855.9,183.8h6.3M1863.4,183.8h4.4M1869.0,183.8h10.9M1881.1,183.8h4.4M1886.7,183.8h5.3M1893.2,183.8h3.5M1804.6,187.8h0.7M1804.6,193.8h0.7M1811.1,195.8h0.7M1817.7,195.8h1.6M1832.6,195.8h2.5M1836.3,195.8h3.5M1841.0,195.8h3.5M1845.6,195.8h1.6M1848.4,195.8h3.5M1853.1,195.8h1.6M1855.9,195.8h4.4M1861.5,195.8h0.7M1863.4,195.8h7.2M1806.5,197.8h0.7M1801.8,199.8h4.4M1807.4,199.8h3.5M1812.1,199.8h3.5M1816.7,199.8h10.9M1828.9,199.8h2.5M1832.6,199.8h9.1M1842.8,199.8h10.9M1855.0,199.8h3.5M1859.6,199.8h2.5M1863.4,199.8h7.2M1871.8,199.8h3.5M1876.4,199.8h6.3M1883.9,199.8h5.3M1890.4,199.8h4.4M1896.0,199.8h0.7M1804.6,203.8h0.7M1804.6,209.8h0.7M1811.1,211.8h0.7M1817.7,211.8h1.6M1832.6,211.8h2.5M1836.3,211.8h3.5M1841.0,211.8h1.6M1843.8,211.8h2.5M1847.5,211.8h5.3M1854.0,211.8h2.5M1857.8,211.8h0.7M1859.6,211.8h7.2M1806.5,213.8h0.7M1801.8,215.8h5.3M1808.3,215.8h3.5M1813.0,215.8h7.2M1821.4,215.8h2.5M1825.1,215.8h2.5M1828.9,215.8h6.3M1836.3,215.8h4.4M1841.9,215.8h2.5M1845.6,215.8h10.9M1857.8,215.8h4.4M1863.4,215.8h2.5M1867.1,215.8h5.3M1873.6,215.8h4.4M1879.2,215.8h1.6M1882.0,215.8h8.1M1891.4,215.8h2.5M1895.1,215.8h1.6M1804.6,219.8h0.7M1804.6,225.8h0.7M1811.1,227.8h0.7M1817.7,227.8h1.6M1832.6,227.8h1.6M1835.4,227.8h2.5M1839.1,227.8h4.4M1844.7,227.8h6.3M1852.2,227.8h4.4M1857.8,227.8h2.5M1861.5,227.8h6.3M1869.0,227.8h1.6M1871.8,227.8h9.1M1806.5,229.8h0.7M1801.8,231.8h6.3M1809.3,231.8h7.2M1817.7,231.8h10.9M1829.8,231.8h4.4M1835.4,231.8h4.4M1841.0,231.8h9.1M1851.2,231.8h4.4M1856.8,231.8h7.2M1865.2,231.8h5.3M1871.8,231.8h7.2M1880.2,231.8h10.9M1892.3,231.8h4.4M1804.6,235.8h0.7M1804.6,241.8h0.7M1811.1,243.8h0.7M1817.7,243.8h1.6M1832.6,243.8h2.5M1836.3,243.8h2.5M1840.0,243.8h5.3M1846.6,243.8h1.6M1849.4,243.8h7.2M1857.8,243.8h1.6M1860.6,243.8h7.2M1869.0,243.8h7.2M1806.5,245.8h0.7M1801.8,247.8h2.5M1805.5,247.8h3.5M1810.2,247.8h5.3M1816.7,247.8h9.1M1827.0,247.8h8.1M1836.3,247.8h2.5M1840.0,247.8h1.6M1842.8,247.8h9.1M1853.1,247.8h9.1M1863.4,247.8h3.5M1868.0,247.8h8.1M1877.4,247.8h7.2M1885.8,247.8h8.1M1895.1,247.8h1.6M1804.6,251.8h0.7M1804.6,257.8h0.7M1811.1,259.8h0.7M1817.7,259.8h1.6M1832.6,259.8h2.5M1836.3,259.8h2.5M1840.0,259.8h1.6M1842.8,259.8h4.4M1848.4,259.8h0.7M1850.3,259.8h6.3M1857.8,259.8h8.1M1806.5,261.8h0.7M1801.8,263.8h9.1M1812.1,263.8h4.4M1817.7,263.8h8.1M1827.0,263.8h4.4M1832.6,263.8h1.6M1835.4,263.8h5.3M1841.9,263.8h4.4M1847.5,263.8h2.5M1851.2,263.8h7.2M1859.6,263.8h2.5M1863.4,263.8h5.3M1869.9,263.8h1.6M1872.7,263.8h3.5M1877.4,263.8h10.9M1889.5,263.8h3.5M1894.2,263.8h2.5M1804.6,267.8h0.7M1799.0,525.8h0.7M1813.9,525.8h0.7M1799.9,531.8h0.7M1832.6,531.8h0.7M1796.2,533.8h6.3M1797.1,535.8h3.5M1801.8,535.8h3.5M1806.5,535.8h1.6M1809.3,535.8h6.3M1816.7,535.8h1.6M1819.5,535.8h2.5M1823.3,535.8h8.1M1832.6,535.8h1.6M1835.4,535.8h12.8M1799.9,541.8h0.7M1819.5,541.8h0.7M1842.8,541.8h0.7M1801.8,545.8h0.7M1820.5,545.8h0.7M1843.8,545.8h0.7M1803.7,547.8h0.7M1805.5,571.8h0.7M1807.4,573.8h0.7M1807.4,575.8h0.7M1805.5,579.8h3.5M1810.2,579.8h1.6M1804.6,581.8h2.5M1808.3,581.8h2.5M1812.1,581.8h2.5M1815.8,581.8h3.5M1805.5,591.8h0.7M1807.4,593.8h0.7M1807.4,595.8h0.7M1805.5,599.8h4.4M1811.1,599.8h1.6M1804.6,601.8h24.9M1796.2,677.8h0.7M1796.2,679.8h0.7M1795.3,681.8h0.7M1798.1,683.8h0.7M1803.7,685.8h0.7M1796.2,693.8h0.7M1798.1,697.8h0.7M1800.9,699.8h0.7M1812.1,699.8h0.7M1824.2,699.8h0.7M1807.4,701.8h0.7M1798.1,707.8h0.7M1800.9,709.8h0.7M1813.0,709.8h0.7M1826.1,709.8h0.7M1807.4,711.8h0.7M1798.1,717.8h0.7M1800.9,719.8h0.7M1812.1,719.8h0.7M1827.0,719.8h0.7M1807.4,721.8h0.7M1798.1,727.8h0.7M1804.6,729.8h0.7M1823.3,729.8h0.7M1837.2,729.8h0.7M1810.2,731.8h0.7M1798.1,737.8h0.7M1803.7,745.8h0.7M1801.8,753.8h0.7M1811.1,753.8h3.5M1815.8,753.8h6.3" stroke="#d8d8d8" stroke-width="1.5" opacity=".52" fill="none"/><path d="M1785.0,139.8h0.7M1819.5,139.8h0.7M1786.9,143.8h0.7M1807.4,143.8h0.7M1788.7,147.8h0.7M1808.3,147.8h0.7M1791.5,151.8h0.7M1849.4,151.8h0.7M1793.4,153.8h0.7M1819.5,153.8h0.7M1795.3,155.8h0.7M1798.1,155.8h0.7M1799.0,155.8h0.7M1803.7,155.8h0.7M1820.5,155.8h1.6M1826.1,155.8h0.7M1827.0,155.8h0.7M1833.5,155.8h0.7M1842.8,155.8h1.6M1850.3,155.8h0.7M1851.2,155.8h1.6M1855.0,155.8h0.7M1795.3,157.8h0.7M1797.1,157.8h0.7M1795.3,161.8h1.6M1798.1,161.8h0.7M1793.4,163.8h1.6M1798.1,163.8h0.7M1791.5,165.8h1.6M1796.2,165.8h0.7M1791.5,169.8h0.7M1849.4,169.8h0.7M1793.4,173.8h0.7M1817.7,173.8h0.7M1795.3,177.8h0.7M1825.1,177.8h0.7M1797.1,179.8h0.7M1799.9,179.8h0.7M1800.9,179.8h0.7M1816.7,179.8h0.7M1819.5,179.8h1.6M1825.1,179.8h0.7M1827.0,179.8h0.7M1831.7,179.8h0.7M1869.0,179.8h1.6M1874.6,179.8h0.7M1875.5,179.8h1.6M1879.2,179.8h0.7M1797.1,181.8h0.7M1819.5,181.8h0.7M1797.1,185.8h1.6M1801.8,185.8h0.7M1797.1,187.8h0.7M1835.4,187.8h0.7M1836.3,187.8h1.6M1839.1,187.8h0.7M1795.3,189.8h1.6M1799.9,189.8h0.7M1795.3,193.8h0.7M1814.9,193.8h0.7M1797.1,195.8h0.7M1799.9,195.8h0.7M1800.9,195.8h0.7M1816.7,195.8h0.7M1819.5,195.8h1.6M1825.1,195.8h0.7M1827.0,195.8h0.7M1831.7,195.8h0.7M1870.8,195.8h1.6M1876.4,195.8h0.7M1877.4,195.8h1.6M1881.1,195.8h0.7M1797.1,197.8h0.7M1819.5,197.8h0.7M1797.1,201.8h1.6M1801.8,201.8h0.7M1797.1,203.8h0.7M1835.4,203.8h0.7M1836.3,203.8h1.6M1839.1,203.8h0.7M1795.3,205.8h1.6M1799.9,205.8h0.7M1795.3,209.8h0.7M1814.9,209.8h0.7M1797.1,211.8h0.7M1799.9,211.8h0.7M1800.9,211.8h0.7M1816.7,211.8h0.7M1819.5,211.8h1.6M1825.1,211.8h0.7M1827.0,211.8h0.7M1831.7,211.8h0.7M1867.1,211.8h1.6M1872.7,211.8h0.7M1873.6,211.8h1.6M1877.4,211.8h0.7M1797.1,213.8h0.7M1819.5,213.8h0.7M1797.1,217.8h1.6M1801.8,217.8h0.7M1797.1,219.8h0.7M1835.4,219.8h0.7M1836.3,219.8h1.6M1839.1,219.8h0.7M1795.3,221.8h1.6M1799.9,221.8h0.7M1795.3,225.8h0.7M1814.9,225.8h0.7M1797.1,227.8h0.7M1799.9,227.8h0.7M1800.9,227.8h0.7M1816.7,227.8h0.7M1819.5,227.8h1.6M1825.1,227.8h0.7M1827.0,227.8h0.7M1831.7,227.8h0.7M1881.1,227.8h1.6M1886.7,227.8h0.7M1887.6,227.8h1.6M1891.4,227.8h0.7M1797.1,229.8h0.7M1819.5,229.8h0.7M1797.1,233.8h1.6M1801.8,233.8h0.7M1797.1,235.8h0.7M1835.4,235.8h0.7M1836.3,235.8h1.6M1839.1,235.8h0.7M1795.3,237.8h1.6M1799.9,237.8h0.7M1795.3,241.8h0.7M1814.9,241.8h0.7M1797.1,243.8h0.7M1799.9,243.8h0.7M1800.9,243.8h0.7M1816.7,243.8h0.7M1819.5,243.8h1.6M1825.1,243.8h0.7M1827.0,243.8h0.7M1831.7,243.8h0.7M1876.4,243.8h1.6M1882.0,243.8h0.7M1883.0,243.8h1.6M1886.7,243.8h0.7M1797.1,245.8h0.7M1819.5,245.8h0.7M1797.1,249.8h1.6M1801.8,249.8h0.7M1797.1,251.8h0.7M1835.4,251.8h0.7M1836.3,251.8h1.6M1839.1,251.8h0.7M1795.3,253.8h1.6M1799.9,253.8h0.7M1795.3,257.8h0.7M1814.9,257.8h0.7M1797.1,259.8h0.7M1799.9,259.8h0.7M1800.9,259.8h0.7M1816.7,259.8h0.7M1819.5,259.8h1.6M1825.1,259.8h0.7M1827.0,259.8h0.7M1831.7,259.8h0.7M1866.2,259.8h1.6M1871.8,259.8h0.7M1872.7,259.8h1.6M1876.4,259.8h0.7M1797.1,261.8h0.7M1819.5,261.8h0.7M1797.1,265.8h1.6M1801.8,265.8h0.7M1797.1,267.8h0.7M1835.4,267.8h0.7M1836.3,267.8h1.6M1839.1,267.8h0.7M1795.3,269.8h1.6M1799.9,269.8h0.7M1793.4,273.8h1.6M1798.1,273.8h0.7M1791.5,277.8h1.6M1796.2,277.8h0.7M1789.7,279.8h1.6M1794.3,279.8h0.7M1786.9,283.8h1.6M1791.5,283.8h0.7M1785.0,287.8h1.6M1793.4,287.8h0.7M1788.7,525.8h0.7M1830.7,525.8h0.7M1790.6,531.8h0.7M1841.9,531.8h0.7M1792.5,533.8h0.7M1795.3,533.8h0.7M1802.7,533.8h1.6M1806.5,533.8h0.7M1794.3,535.8h0.7M1796.2,535.8h0.7M1848.4,535.8h1.6M1851.2,535.8h0.7M1790.6,537.8h1.6M1795.3,537.8h0.7M1790.6,541.8h0.7M1848.4,541.8h0.7M1792.5,545.8h0.7M1849.4,545.8h0.7M1794.3,547.8h0.7M1813.9,547.8h0.7M1796.2,571.8h0.7M1816.7,571.8h0.7M1798.1,573.8h0.7M1842.8,573.8h0.7M1799.9,575.8h0.7M1837.2,575.8h0.7M1838.2,575.8h1.6M1841.0,575.8h0.7M1799.9,577.8h0.7M1803.7,577.8h0.7M1801.8,579.8h0.7M1804.6,579.8h0.7M1812.1,579.8h1.6M1815.8,579.8h0.7M1801.8,581.8h0.7M1803.7,581.8h0.7M1819.5,581.8h1.6M1822.3,581.8h0.7M1799.9,583.8h1.6M1804.6,583.8h0.7M1798.1,585.8h1.6M1802.7,585.8h0.7M1796.2,587.8h1.6M1800.9,587.8h0.7M1796.2,591.8h0.7M1816.7,591.8h0.7M1798.1,593.8h0.7M1842.8,593.8h0.7M1799.9,595.8h0.7M1836.3,595.8h0.7M1837.2,595.8h1.6M1840.0,595.8h0.7M1799.9,597.8h0.7M1803.7,597.8h0.7M1801.8,599.8h0.7M1804.6,599.8h0.7M1813.0,599.8h1.6M1816.7,599.8h0.7M1801.8,601.8h0.7M1803.7,601.8h0.7M1829.8,601.8h1.6M1832.6,601.8h0.7M1799.9,603.8h1.6M1804.6,603.8h0.7M1798.1,605.8h1.6M1802.7,605.8h0.7M1796.2,607.8h1.6M1800.9,607.8h0.7M1794.3,611.8h1.6M1799.0,611.8h0.7M1792.5,613.8h1.6M1797.1,613.8h0.7M1785.0,677.8h0.7M1809.3,685.8h0.7M1786.9,693.8h0.7M1806.5,693.8h0.7M1788.7,697.8h0.7M1808.3,697.8h0.7M1790.6,699.8h0.7M1827.0,701.8h0.7M1788.7,703.8h1.6M1793.4,703.8h0.7M1788.7,707.8h0.7M1808.3,707.8h0.7M1790.6,709.8h0.7M1827.9,711.8h0.7M1788.7,713.8h1.6M1793.4,713.8h0.7M1788.7,717.8h0.7M1809.3,717.8h0.7M1790.6,719.8h0.7M1816.7,721.8h0.7M1788.7,723.8h1.6M1793.4,723.8h0.7M1788.7,727.8h0.7M1809.3,727.8h0.7M1790.6,729.8h0.7M1827.9,731.8h0.7M1828.9,731.8h1.6M1838.2,731.8h0.7M1788.7,733.8h1.6M1793.4,733.8h0.7M1788.7,737.8h0.7M1820.5,737.8h0.7M1794.3,745.8h0.7M1817.7,745.8h0.7M1830.7,745.8h1.6M1835.4,745.8h0.7M1790.6,753.8h0.7M1810.2,753.8h0.7M1822.3,753.8h1.6M1829.8,753.8h0.7M1788.7,757.8h1.6M1793.4,757.8h0.7M1786.9,759.8h1.6M1791.5,759.8h0.7M1785.0,761.8h1.6M1790.6,761.8h0.7" stroke="#666666" stroke-width="1.5" opacity=".52" fill="none"/><path d="M1786.9,689.8h1.6M1799.9,689.8h1.6M1790.6,741.8h1.6M1804.6,741.8h1.6M1792.5,743.8h1.6M1817.7,743.8h1.6M1818.6,745.8h1.6M1828.9,745.8h1.6M1792.5,747.8h1.6M1801.8,747.8h1.6M1790.6,749.8h1.6M1799.0,749.8h1.6" stroke="#9a8a30" stroke-width="1.5" opacity=".52" fill="none"/><path d="M1789.7,689.8h9.1M1793.4,741.8h1.6M1796.2,741.8h7.2M1795.3,743.8h2.5M1799.0,743.8h6.3M1806.5,743.8h1.6M1809.3,743.8h7.2M1821.4,745.8h6.3M1795.3,747.8h5.3M1793.4,749.8h4.4" stroke="#a571a0" stroke-width="1.5" opacity=".52" fill="none"/></g></svg>
</body></html>
